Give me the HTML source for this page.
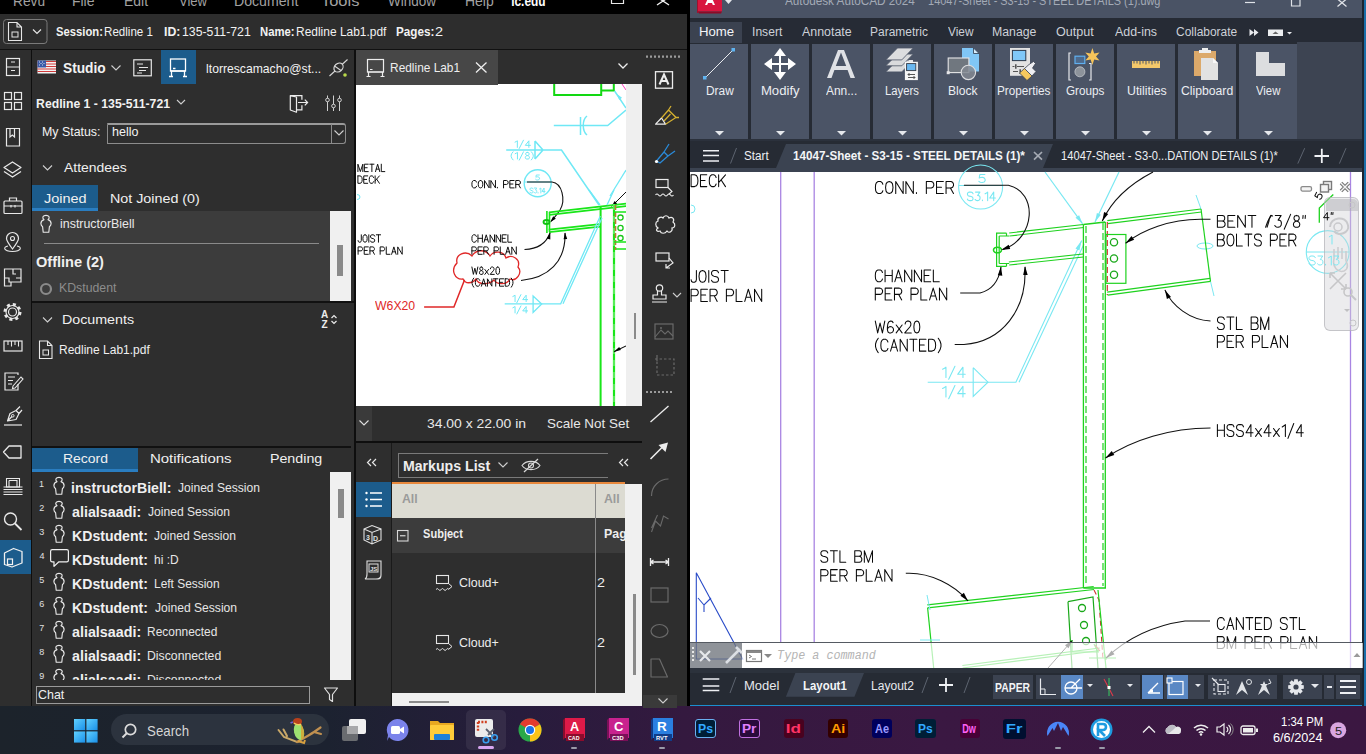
<!DOCTYPE html>
<html><head><meta charset="utf-8">
<style>
*{box-sizing:border-box}
body{margin:0;width:1366px;height:754px;position:relative;overflow:hidden;background:#000;font-family:"Liberation Sans",sans-serif;}
.a{position:absolute}
.t{position:absolute;white-space:nowrap;line-height:1}
svg{position:absolute;overflow:visible}
</style></head><body>
<!-- base -->
<div class="a" style="left:0px;top:0px;width:687px;height:14px;background:#000;"></div>
<div class="a" style="left:0px;top:14px;width:687px;height:35px;background:#2d2d2d;"></div>
<div class="a" style="left:0px;top:49px;width:687px;height:1px;background:#111;"></div>
<div class="a" style="left:0px;top:50px;width:31px;height:656px;background:#2e2e2e;"></div>
<div class="a" style="left:31px;top:50px;width:1px;height:656px;background:#0e0e0e;"></div>
<div class="a" style="left:32px;top:50px;width:322px;height:656px;background:#2e2e2e;"></div>
<div class="a" style="left:354px;top:50px;width:2px;height:656px;background:#0e0e0e;"></div>
<div class="a" style="left:356px;top:50px;width:331px;height:34px;background:#2e2e2e;"></div>
<div class="a" style="left:356px;top:84px;width:270px;height:322px;background:#fff;"></div>
<div class="a" style="left:626px;top:84px;width:16px;height:322px;background:#efefef;"></div>
<div class="a" style="left:642px;top:50px;width:45px;height:656px;background:#2e2e2e;"></div>
<div class="a" style="left:356px;top:406px;width:286px;height:35px;background:#2e2e2e;"></div>
<div class="a" style="left:356px;top:441px;width:286px;height:2px;background:#0e0e0e;"></div>
<div class="a" style="left:356px;top:443px;width:286px;height:263px;background:#2e2e2e;"></div>
<div class="a" style="left:687px;top:0px;width:3px;height:706px;background:#000;"></div>
<div class="a" style="left:690px;top:0px;width:676px;height:18px;background:#4a5365;"></div>
<div class="a" style="left:690px;top:18px;width:676px;height:25px;background:#262b35;"></div>
<div class="a" style="left:690px;top:42px;width:676px;height:97px;background:#262b34;"></div>
<div class="a" style="left:690px;top:139px;width:676px;height:2px;background:#2b313c;"></div>
<div class="a" style="left:690px;top:141px;width:676px;height:31px;background:#262b34;"></div>
<div class="a" style="left:690px;top:172px;width:676px;height:470px;background:#fff;"></div>
<div class="a" style="left:690px;top:642px;width:676px;height:27px;background:#ffffff;"></div>
<div class="a" style="left:690px;top:669px;width:676px;height:36px;background:#262b34;"></div>
<div class="a" style="left:690px;top:705px;width:676px;height:1px;background:#1b8fd0;"></div>
<div class="a" style="left:0px;top:706px;width:1366px;height:48px;background:linear-gradient(90deg,#1c232b 0%,#1c2230 24%,#271c3c 38%,#34193f 50%,#3a1842 68%,#3b1741 100%);"></div>
<!-- acad_top -->
<div class="a" style="left:1362px;top:0px;width:2px;height:706px;background:#1d2430;"></div>
<div class="a" style="left:1364px;top:0px;width:2px;height:706px;background:#1a6ea8;"></div>
<svg style="left:696px;top:0px;" width="40" height="14" viewBox="0 0 40 14">
     <path d="M1,0 H3 V11 L2,13 H1 Z" fill="#a0102e"/>
     <rect x="2" y="0" width="24" height="11.5" fill="#d8163f"/>
     <path d="M2,11.5 H26 L25,13.5 H3 Z" fill="#8e0a26"/>
     <path d="M9,5 L12.5,-3 H15.5 L19,5 H16.8 L16,3 H12 L11.2,5 Z" fill="#fff"/>
     <path d="M29,0 H36 L32.5,4 Z" fill="#e6e8ec"/>
    </svg>
<div class="t" style="left:785.25px;top:-4.56px;font-size:12px;color:#a3aab6;font-family:'Liberation Sans',sans-serif;transform:scaleX(0.9785);transform-origin:0.05px 0;">Autodesk AutoCAD 2024</div>
<div class="t" style="left:927.80px;top:-4.56px;font-size:12px;color:#a3aab6;font-family:'Liberation Sans',sans-serif;transform:scaleX(0.9096);transform-origin:0.90px 0;">14047-Sheet - S3-15 - STEEL DETAILS (1).dwg</div>
<svg style="left:1240px;top:0px;" width="126" height="14" viewBox="0 0 126 14">
     <path d="M5,2.5 H15" stroke="#e0e3e8" stroke-width="1.2"/>
     <path d="M51.5,-2 V6 H60 V-2" stroke="#e0e3e8" fill="none" stroke-width="1.2"/>
     <path d="M97.5,-1 L106.5,6.5 M106.5,-1 L97.5,6.5" stroke="#e0e3e8" stroke-width="1.3"/>
    </svg>
<div class="a" style="left:690px;top:22px;width:52px;height:21px;background:#3b4250;"></div>
<div class="t" style="left:699.00px;top:26.02px;font-size:12.5px;color:#f2f4f7;font-family:'Liberation Sans',sans-serif;transform:scaleX(1.0551);transform-origin:1.00px 0;">Home</div>
<div class="t" style="left:751.85px;top:26.02px;font-size:12.5px;color:#cdd1d8;font-family:'Liberation Sans',sans-serif;transform:scaleX(0.9667);transform-origin:1.15px 0;">Insert</div>
<div class="t" style="left:801.95px;top:26.02px;font-size:12.5px;color:#cdd1d8;font-family:'Liberation Sans',sans-serif;transform:scaleX(0.9919);transform-origin:0.05px 0;">Annotate</div>
<div class="t" style="left:870.20px;top:26.02px;font-size:12.5px;color:#cdd1d8;font-family:'Liberation Sans',sans-serif;transform:scaleX(0.9568);transform-origin:1.00px 0;">Parametric</div>
<div class="t" style="left:947.55px;top:26.02px;font-size:12.5px;color:#cdd1d8;font-family:'Liberation Sans',sans-serif;transform:scaleX(0.9478);transform-origin:0.05px 0;">View</div>
<div class="t" style="left:992.30px;top:26.02px;font-size:12.5px;color:#cdd1d8;font-family:'Liberation Sans',sans-serif;transform:scaleX(0.9828);transform-origin:1.00px 0;">Manage</div>
<div class="t" style="left:1055.90px;top:26.02px;font-size:12.5px;color:#cdd1d8;font-family:'Liberation Sans',sans-serif;transform:scaleX(1.0054);transform-origin:0.60px 0;">Output</div>
<div class="t" style="left:1114.55px;top:26.02px;font-size:12.5px;color:#cdd1d8;font-family:'Liberation Sans',sans-serif;transform:scaleX(0.9916);transform-origin:0.05px 0;">Add-ins</div>
<div class="t" style="left:1175.95px;top:26.02px;font-size:12.5px;color:#cdd1d8;font-family:'Liberation Sans',sans-serif;transform:scaleX(0.9569);transform-origin:0.65px 0;">Collaborate</div>
<svg style="left:1249px;top:29px;" width="50" height="8" viewBox="0 0 50 8">
     <path d="M0.5,0 L5,3.5 L0.5,7 Z M5,0 L9.5,3.5 L5,7 Z" fill="#e8eaee"/>
     <rect x="19" y="0.5" width="15" height="6.5" fill="#eceef0"/>
     <path d="M23.5,5 L26.5,2.5 L29.5,5 Z" fill="#666"/>
     <path d="M38,3 H43 L40.5,5.5 Z" fill="#e8eaee"/>
    </svg>
<div class="a" style="left:690px;top:44px;width:58px;height:95px;background:#4b5466;"></div>
<div class="t" style="left:705.50px;top:85.44px;font-size:12px;color:#eceef2;font-family:'Liberation Sans',sans-serif;transform:scaleX(0.9889);transform-origin:1.00px 0;">Draw</div>
<svg style="left:715px;top:131px;" width="9" height="5" viewBox="0 0 9 5"><path d="M0,0 H9 L4.5,4.5 Z" fill="#e6e8ec"/></svg>
<div class="a" style="left:751px;top:44px;width:58px;height:95px;background:#4b5466;"></div>
<div class="t" style="left:760.50px;top:85.44px;font-size:12px;color:#eceef2;font-family:'Liberation Sans',sans-serif;transform:scaleX(1.0949);transform-origin:1.00px 0;">Modify</div>
<svg style="left:776px;top:131px;" width="9" height="5" viewBox="0 0 9 5"><path d="M0,0 H9 L4.5,4.5 Z" fill="#e6e8ec"/></svg>
<div class="a" style="left:812px;top:44px;width:58px;height:95px;background:#4b5466;"></div>
<div class="t" style="left:826.35px;top:85.44px;font-size:12px;color:#eceef2;font-family:'Liberation Sans',sans-serif;transform:scaleX(0.9950);transform-origin:0.05px 0;">Ann...</div>
<svg style="left:837px;top:131px;" width="9" height="5" viewBox="0 0 9 5"><path d="M0,0 H9 L4.5,4.5 Z" fill="#e6e8ec"/></svg>
<div class="a" style="left:873px;top:44px;width:58px;height:95px;background:#4b5466;"></div>
<div class="t" style="left:884.60px;top:85.44px;font-size:12px;color:#eceef2;font-family:'Liberation Sans',sans-serif;transform:scaleX(0.9391);transform-origin:1.00px 0;">Layers</div>
<svg style="left:898px;top:131px;" width="9" height="5" viewBox="0 0 9 5"><path d="M0,0 H9 L4.5,4.5 Z" fill="#e6e8ec"/></svg>
<div class="a" style="left:934px;top:44px;width:58px;height:95px;background:#4b5466;"></div>
<div class="t" style="left:947.60px;top:85.44px;font-size:12px;color:#eceef2;font-family:'Liberation Sans',sans-serif;transform:scaleX(1.0071);transform-origin:1.00px 0;">Block</div>
<svg style="left:959px;top:131px;" width="9" height="5" viewBox="0 0 9 5"><path d="M0,0 H9 L4.5,4.5 Z" fill="#e6e8ec"/></svg>
<div class="a" style="left:995px;top:44px;width:58px;height:95px;background:#4b5466;"></div>
<div class="t" style="left:996.70px;top:85.44px;font-size:12px;color:#eceef2;font-family:'Liberation Sans',sans-serif;transform:scaleX(0.9774);transform-origin:1.00px 0;">Properties</div>
<svg style="left:1020px;top:131px;" width="9" height="5" viewBox="0 0 9 5"><path d="M0,0 H9 L4.5,4.5 Z" fill="#e6e8ec"/></svg>
<div class="a" style="left:1056px;top:44px;width:58px;height:95px;background:#4b5466;"></div>
<div class="t" style="left:1066.10px;top:85.44px;font-size:12px;color:#eceef2;font-family:'Liberation Sans',sans-serif;transform:scaleX(0.9752);transform-origin:0.60px 0;">Groups</div>
<svg style="left:1081px;top:131px;" width="9" height="5" viewBox="0 0 9 5"><path d="M0,0 H9 L4.5,4.5 Z" fill="#e6e8ec"/></svg>
<div class="a" style="left:1117px;top:44px;width:58px;height:95px;background:#4b5466;"></div>
<div class="t" style="left:1126.60px;top:85.44px;font-size:12px;color:#eceef2;font-family:'Liberation Sans',sans-serif;transform:scaleX(1.0295);transform-origin:0.90px 0;">Utilities</div>
<svg style="left:1142px;top:131px;" width="9" height="5" viewBox="0 0 9 5"><path d="M0,0 H9 L4.5,4.5 Z" fill="#e6e8ec"/></svg>
<div class="a" style="left:1178px;top:44px;width:58px;height:95px;background:#4b5466;"></div>
<div class="t" style="left:1180.80px;top:85.44px;font-size:12px;color:#eceef2;font-family:'Liberation Sans',sans-serif;transform:scaleX(1.0170);transform-origin:0.60px 0;">Clipboard</div>
<svg style="left:1203px;top:131px;" width="9" height="5" viewBox="0 0 9 5"><path d="M0,0 H9 L4.5,4.5 Z" fill="#e6e8ec"/></svg>
<div class="a" style="left:1239px;top:44px;width:58px;height:95px;background:#4b5466;"></div>
<div class="t" style="left:1255.55px;top:85.44px;font-size:12px;color:#eceef2;font-family:'Liberation Sans',sans-serif;transform:scaleX(0.9437);transform-origin:0.05px 0;">View</div>
<svg style="left:1264px;top:131px;" width="9" height="5" viewBox="0 0 9 5"><path d="M0,0 H9 L4.5,4.5 Z" fill="#e6e8ec"/></svg>
<div class="a" style="left:1297px;top:42px;width:65px;height:97px;background:#3d4452;"></div>
<svg style="left:690px;top:44px;" width="58" height="40" viewBox="0 0 58 40">
     <line x1="15" y1="34" x2="43" y2="6" stroke="#e8eaee" stroke-width="1"/>
     <rect x="13" y="32" width="3.5" height="3.5" fill="#5fb3f0"/>
     <rect x="41.5" y="4" width="3.5" height="3.5" fill="#5fb3f0"/></svg>
<svg style="left:751px;top:44px;" width="58" height="40" viewBox="0 0 58 40">
     <g fill="#fff"><path d="M29,4 L35,12 H23 Z M29,36 L35,28 H23 Z M13,20 L21,14 V26 Z M45,20 L37,14 V26 Z"/>
     <rect x="28" y="10" width="2" height="20"/><rect x="19" y="19" width="20" height="2"/></g></svg>
<svg style="left:812px;top:44px;" width="58" height="40" viewBox="0 0 58 40">
     <path d="M15,34 L26,6 H32 L43,34 H38.5 L35.6,26 H22.4 L19.5,34 Z M23.8,22 H34.2 L29,8.5 Z" fill="#dfe1e5" fill-rule="evenodd"/></svg>
<svg style="left:873px;top:44px;" width="58" height="40" viewBox="0 0 58 40">
     <path d="M12.8,27.9 L24.5,16 H40.2 L28.8,27.9 Z" fill="#d9dadc" stroke="#4b5466" stroke-width="0.8"/>
     <path d="M12.8,21.8 L24.5,10.1 H40.2 L28.8,21.8 Z" fill="#d9dadc" stroke="#4b5466" stroke-width="0.8"/>
     <path d="M12.8,15.9 L24.5,4 H40.2 L28.8,15.9 Z" fill="#dcdddf" stroke="#4b5466" stroke-width="0.8"/>
     <rect x="31.9" y="17.8" width="13" height="18.3" fill="#f6f6f6"/>
     <rect x="36" y="16" width="4" height="2" fill="#e6e6e6"/>
     <rect x="33.6" y="19.6" width="9.2" height="7" fill="#6ab8f0" stroke="#333a44" stroke-width="0.9"/>
     <path d="M35,30.5 H42 M35,33.5 H42 M36.5,29 L35,30.5 L36.5,32 M40.5,32 L42,33.5 L40.5,35" stroke="#444" stroke-width="0.9" fill="none"/></svg>
<svg style="left:934px;top:44px;" width="58" height="40" viewBox="0 0 58 40">
     <path d="M28,4 H39.5 L45,9.5 V27.6 H28 Z" fill="#80c6f6"/>
     <path d="M39.5,4 V9.5 H45 Z" fill="#d8ecfa" stroke="#2d3a4c" stroke-width="0.8"/>
     <rect x="14.2" y="14" width="20.7" height="14.6" fill="#70777f" stroke="#e6e6e8" stroke-width="1.1"/>
     <circle cx="34.4" cy="28.4" r="7.2" fill="rgba(130,136,146,0.85)" stroke="#dcdde0" stroke-width="1.1"/>
     <rect x="12.7" y="27.2" width="3" height="3" fill="#e6e6e8"/></svg>
<svg style="left:995px;top:44px;" width="58" height="40" viewBox="0 0 58 40">
     <rect x="15" y="4" width="20" height="27.8" fill="#e2e2e2"/>
     <rect x="17.4" y="6.4" width="13.4" height="10.2" fill="#80c8f8" stroke="#2d3a4c" stroke-width="1"/>
     <path d="M17.5,22.5 H19.5 M22,22.5 H29 M18,27.5 H23" stroke="#555" stroke-width="1"/>
     <path d="M20.8,20.2 V24.8 M25.2,25.2 V29.8" stroke="#555" stroke-width="1.6"/>
     <path d="M24.5,29 L29.5,24.5 L37,32 L32,36.5 Z" fill="#f7c95e" stroke="#3b4250" stroke-width="0.8"/>
     <path d="M29.5,24.5 L34,20.5 L38.5,17.5 L40.5,19.5 L37.5,24 L41,27.5 L37,32 Z" fill="#eeeef2" stroke="#3b4250" stroke-width="0.8"/></svg>
<svg style="left:1056px;top:44px;" width="58" height="40" viewBox="0 0 58 40">
     <path d="M15,9 H13 V36 H15 M33,19.5 H35 V36 H33" stroke="#e6e8ec" fill="none" stroke-width="1.2"/>
     <rect x="19" y="12.2" width="9.8" height="7.3" fill="#4e6a8c" stroke="#60b0f0" stroke-width="1.2"/>
     <circle cx="23.9" cy="27.8" r="5" fill="#8d939b" stroke="#c3c7cc" stroke-width="0.8"/>
     <path d="M36.4,4 L38.2,9.5 L43.5,8.5 L40,12.5 L43.5,16.5 L38.2,15.5 L36.4,21 L34.6,15.5 L29.3,16.5 L32.8,12.5 L29.3,8.5 L34.6,9.5 Z" fill="#f6c45a"/></svg>
<svg style="left:1117px;top:44px;" width="58" height="40" viewBox="0 0 58 40">
     <rect x="15" y="17" width="28" height="7" fill="#f4c86a"/>
     <path d="M17,17 V19.5 M20,17 V19.5 M23,17 V20.5 M26,17 V19.5 M29,17 V20.5 M32,17 V19.5 M35,17 V20.5 M38,17 V19.5 M41,17 V19.5" stroke="#4b5466" stroke-width="1"/></svg>
<svg style="left:1178px;top:44px;" width="58" height="40" viewBox="0 0 58 40">
     <rect x="16" y="7" width="22" height="25" fill="#dca96a"/>
     <rect x="24" y="4" width="6" height="3" fill="#eeeeee"/>
     <rect x="21" y="6" width="12" height="3" fill="#eeeeee"/>
     <path d="M23,14 H35 L40,19 V36 H23 Z" fill="#e2e2e2"/>
     <path d="M35,14 L40,19 H35 Z" fill="#f8f8f8"/></svg>
<svg style="left:1239px;top:44px;" width="58" height="40" viewBox="0 0 58 40">
     <path d="M17,8 H30 V19 H46 V32 H17 Z" fill="#dcdddf"/></svg>
<div class="a" style="left:690px;top:168px;width:672px;height:4px;background:#3b4351;"></div>
<svg style="left:690px;top:141px;" width="672" height="31" viewBox="0 0 672 31">
     <path d="M86,27 L96,3 H363 L353,27 Z" fill="#3b4351"/>
     <path d="M13,9.7 H29 M13,14.6 H29 M13,19.9 H29" stroke="#eef0f3" stroke-width="1.5"/>
     <path d="M40.5,22.5 L46.5,7" stroke="#5d6470" stroke-width="1"/>
     <path d="M607.8,22.6 L614.7,7.2 M649.4,22.6 L656,7.2" stroke="#5d6470" stroke-width="1"/>
     <path d="M624.5,15 H639 M631.8,7.8 V22" stroke="#f0f2f5" stroke-width="1.8"/>
     <path d="M344,11 L352,18.6 M352,11 L344,18.6" stroke="#a6abb4" stroke-width="1.7"/>
    </svg>
<div class="t" style="left:744.45px;top:150.02px;font-size:12.5px;color:#eef0f3;font-family:'Liberation Sans',sans-serif;transform:scaleX(0.9339);transform-origin:0.55px 0;">Start</div>
<div class="t" style="left:792.80px;top:150.02px;font-size:12.5px;color:#f4f6f8;font-family:'Liberation Sans',sans-serif;font-weight:bold;transform:scaleX(0.9339);transform-origin:0.80px 0;">14047-Sheet - S3-15 - STEEL DETAILS (1)*</div>
<div class="t" style="left:1060.65px;top:150.02px;font-size:12.5px;color:#eef0f3;font-family:'Liberation Sans',sans-serif;transform:scaleX(0.8882);transform-origin:0.95px 0;">14047-Sheet - S3-0...DATION DETAILS (1)*</div>
<!-- acad_draw -->
<svg style="left:690px;top:172px" width="672" height="496" viewBox="690 172 672 496"><line x1="780.7" y1="172" x2="780.7" y2="643" stroke="#a985e2" stroke-width="1.3"/><line x1="814.2" y1="172" x2="814.2" y2="643" stroke="#a985e2" stroke-width="1.3"/><line x1="1350.5" y1="172" x2="1350.5" y2="668" stroke="#a985e2" stroke-width="1.3"/><path d="M1045,172 L1082.6,223.8 M1119,172 L1095,222" stroke="#7ae8f2" stroke-width="1.2" fill="none"/><path d="M1082.6,223.8 L1075.5,217.8 L1079.1,215.2 Z" fill="#7ae8f2"/><path d="M1095.0,222.0 L1096.9,212.9 L1100.9,214.8 Z" fill="#7ae8f2"/><path d="M927.7,382.2 H1015.9 L1081.7,240.5 M1019,382.2 L1084,244" stroke="#7ae8f2" stroke-width="1.1" fill="none"/><path d="M1081.7,240.5 L1079.4,250.5 L1075.5,248.6 Z" fill="#7ae8f2"/><path d="M973.2,367.7 V396.5 L988,382.2 L973.2,367.7" stroke="#7ae8f2" stroke-width="1.1" fill="none"/><circle cx="980.6" cy="187" r="22" stroke="#7ae8f2" stroke-width="1.1" fill="none"/><line x1="958.6" y1="185.5" x2="1002.6" y2="185.5" stroke="#7ae8f2" stroke-width="1"/><path d="M691,205 A4,4 0 0 1 691,213" stroke="#7ae8f2" stroke-width="1" fill="none"/><path d="M1196,195 L1201,209 M1210.5,281.4 L1214,296" stroke="#7ae8f2" stroke-width="1"/><ellipse cx="1205" cy="246" rx="8" ry="3" stroke="#7ae8f2" stroke-width="1" fill="none"/><line x1="1009.2" y1="233" x2="1083.4" y2="224.5" stroke="#1fd21f" stroke-width="1.2"/><line x1="1009.5" y1="236.0" x2="1083.7" y2="227.5" stroke="#1fd21f" stroke-width="1.2"/><line x1="1009.2" y1="265" x2="1083.4" y2="257" stroke="#1fd21f" stroke-width="1.2"/><line x1="1008.9" y1="262.0" x2="1083.1" y2="254.0" stroke="#1fd21f" stroke-width="1.2"/><path d="M1006.5,233.2 H996.6 V266.3 H1006.5 M999.2,236 V263.5 M1006.5,233.2 V236 H999.2 M1006.5,266.3 V263.5 H999.2 M1006.5,236 L1009.2,236 M1006.5,263.5 L1009.2,263.5" stroke="#1fd21f" stroke-width="1.2" fill="none"/><ellipse cx="997.5" cy="250" rx="4" ry="2.8" stroke="#1fd21f" stroke-width="1.6" fill="none"/><path d="M1083.4,224.5 V588 M1105.3,222 V588 M1083.4,224.5 L1105.3,222 M1083.4,588 H1106" stroke="#1fd21f" stroke-width="1.3" fill="none"/><path d="M1086,226 V586 M1103,223 V586" stroke="#1fd21f" stroke-width="1.2" stroke-dasharray="7,3" fill="none"/><line x1="1107.3" y1="220.6" x2="1201" y2="209" stroke="#1fd21f" stroke-width="1.2"/><line x1="1107.7" y1="223.6" x2="1201.4" y2="212.0" stroke="#1fd21f" stroke-width="1.2"/><line x1="1107.6" y1="295.2" x2="1210.5" y2="281.4" stroke="#1fd21f" stroke-width="1.2"/><line x1="1107.2" y1="292.2" x2="1210.1" y2="278.4" stroke="#1fd21f" stroke-width="1.2"/><line x1="1201" y1="209" x2="1210.5" y2="281.4" stroke="#1fd21f" stroke-width="1.2"/><path d="M1107.3,222 V295" stroke="#d03030" stroke-width="1.2" stroke-dasharray="6,3"/><rect x="1106" y="234.5" width="19.9" height="48.8" stroke="#1fd21f" stroke-width="1.2" fill="none"/><circle cx="1114" cy="242.2" r="3.6" stroke="#1aa81a" stroke-width="1.3" fill="none"/><circle cx="1114" cy="258.5" r="3.6" stroke="#1aa81a" stroke-width="1.3" fill="none"/><circle cx="1114" cy="274.8" r="3.6" stroke="#1aa81a" stroke-width="1.3" fill="none"/><line x1="927.6" y1="607.8" x2="1094" y2="589.5" stroke="#1fd21f" stroke-width="1.2"/><line x1="927.3" y1="604.8" x2="1093.7" y2="586.5" stroke="#1fd21f" stroke-width="1.2"/><line x1="927.6" y1="607.8" x2="933.7" y2="668" stroke="#1fd21f" stroke-width="1.2"/><path d="M1068,601.7 L1093,597 L1098,668 M1068,601.7 L1072,668" stroke="#1aa81a" stroke-width="1.2" fill="none"/><circle cx="1082" cy="608" r="3.5" stroke="#1aa81a" stroke-width="1.3" fill="none"/><circle cx="1084" cy="625" r="3.5" stroke="#1aa81a" stroke-width="1.3" fill="none"/><circle cx="1086" cy="641" r="3.5" stroke="#1aa81a" stroke-width="1.3" fill="none"/><path d="M1094,590 L1099,600 L1103,660" stroke="#d03030" stroke-width="1.1" stroke-dasharray="5,3" fill="none"/><path d="M1098,590 L1106,668" stroke="#1fd21f" stroke-width="1.2" fill="none"/><path d="M927,595 L930,610 M920,640 H940" stroke="#7ae8f2" stroke-width="1" fill="none"/><line x1="962.7" y1="668" x2="1100" y2="650.5" stroke="#1fd21f" stroke-width="1.2"/><line x1="962.4" y1="665.5" x2="1099.7" y2="648.0" stroke="#1fd21f" stroke-width="1.2"/><path d="M1072,640 V652 H1099 M1094,644 L1098,652" stroke="#1fd21f" stroke-width="1.2" fill="none"/><path d="M1095,645 L1100,651" stroke="#d03030" stroke-width="1.1" fill="none"/><path d="M1089,658 H1116 M1104,652 L1106,660" stroke="#1fd21f" stroke-width="1.2" fill="none"/><path d="M696.3,572.7 V659 H742.7 Z" stroke="#2a4cc8" stroke-width="1.1" fill="none"/><path d="M698,598 L704,605 L711,598 M704,605 V612" stroke="#2a4cc8" stroke-width="1.1" fill="none"/><path d="M963.9,185.2 H1008.4 C1038,192 1036,238 1003,249.5" stroke="#111" stroke-width="1.1" fill="none"/><path d="M1001.0,250.0 L1008.7,244.8 L1010.2,249.1 Z" fill="#000"/><path d="M1153,172 C1130,184 1112,200 1102.3,221" stroke="#111" stroke-width="1.1" fill="none"/><path d="M1102.3,221.0 L1104.1,211.9 L1108.2,213.9 Z" fill="#000"/><path d="M960.2,293 H980 C992,290 999,280 1001,267" stroke="#111" stroke-width="1.1" fill="none"/><path d="M1001.0,266.5 L1002.3,275.7 L997.8,275.2 Z" fill="#000"/><path d="M954.7,344.5 H964 C1002,342 1027,310 1025,267" stroke="#111" stroke-width="1.1" fill="none"/><path d="M1025.0,266.0 L1027.7,274.9 L1023.2,275.1 Z" fill="#000"/><path d="M1210.5,219.2 H1201 C1170,219 1142,230 1125.6,243.2" stroke="#111" stroke-width="1.1" fill="none"/><path d="M1125.6,243.2 L1131.5,236.0 L1134.2,239.7 Z" fill="#000"/><path d="M1210.5,321 C1190,320 1172,306 1164.9,289.9" stroke="#111" stroke-width="1.1" fill="none"/><path d="M1164.9,289.9 L1171.0,296.9 L1166.9,299.0 Z" fill="#000"/><path d="M1210.5,428 C1170,428 1132,440 1105.5,458" stroke="#111" stroke-width="1.1" fill="none"/><path d="M1105.5,458.0 L1111.7,451.1 L1114.3,454.9 Z" fill="#000"/><path d="M905.8,573.3 C930,572 955,585 968,601" stroke="#111" stroke-width="1.1" fill="none"/><path d="M968.0,601.0 L960.4,595.7 L963.9,592.7 Z" fill="#000"/><path d="M1210,621 H1185 C1150,626 1125,640 1106,658" stroke="#111" stroke-width="1.1" fill="none"/><path d="M1048,668 L1070,643" stroke="#111" stroke-width="1" fill="none"/><path d="M1072.6,640.0 L1068.5,648.3 L1065.0,645.3 Z" fill="#000"/><path d="M1106.0,658.0 L1111.6,650.6 L1114.5,654.2 Z" fill="#000"/><circle cx="1327.7" cy="252" r="21.4" stroke="#7ae8f2" stroke-width="1.1" fill="none"/><line x1="1306" y1="252" x2="1349" y2="252" stroke="#7ae8f2" stroke-width="1"/><path d="M1333.3,194.5 L1319.3,208 V222.7" stroke="#1fd21f" stroke-width="1.3" fill="none"/></svg>
<svg style="left:0;top:0" width="1366" height="754" viewBox="0 0 1366 754"><defs><clipPath id="cadclip"><rect x="690" y="172" width="672" height="496"/></clipPath></defs><g clip-path="url(#cadclip)"><path d="M691.10,174.80 L691.10,186.60 L694.53,186.60 L696.47,185.81 L697.61,183.72 L697.96,180.70 L697.61,177.68 L696.47,175.59 L694.53,174.80 L691.10,174.80 M706.76,174.80 L700.47,174.80 L700.47,186.60 L706.76,186.60 M700.47,180.44 L705.04,180.44 M716.13,177.42 L715.44,175.85 L714.07,174.80 L711.79,174.80 L710.30,175.85 L709.50,177.68 L709.27,180.70 L709.50,183.72 L710.30,185.55 L711.79,186.60 L714.07,186.60 L715.44,185.55 L716.13,183.98 M718.64,174.80 L718.64,186.60 M725.50,174.80 L718.64,182.67 M721.16,180.04 L725.50,186.60" stroke="#0a0a0a" stroke-width="1.05" fill="none" stroke-linecap="round" stroke-linejoin="round"/><path d="M696.40,270.50 L696.40,279.68 L695.81,281.51 L694.40,282.30 L692.87,282.30 L691.57,281.51 L691.10,279.68 M702.52,270.50 L700.64,271.16 L699.46,272.86 L698.99,276.40 L699.46,279.94 L700.64,281.64 L702.52,282.30 L704.41,281.64 L705.59,279.94 L706.06,276.40 L705.59,272.86 L704.41,271.16 L702.52,270.50 M708.77,270.50 L708.77,282.30 M718.54,272.73 L717.60,271.02 L715.95,270.50 L713.83,270.50 L712.42,271.02 L711.59,272.34 L711.59,274.17 L712.42,275.48 L713.83,276.14 L716.19,276.66 L717.60,277.32 L718.42,278.63 L718.42,280.46 L717.60,281.78 L715.95,282.30 L713.83,282.30 L712.42,281.78 L711.48,280.20 M721.13,270.50 L728.20,270.50 M724.67,270.50 L724.67,282.30" stroke="#0a0a0a" stroke-width="1.05" fill="none" stroke-linecap="round" stroke-linejoin="round"/><path d="M691.10,301.40 L691.10,289.20 L695.87,289.20 L697.42,290.01 L698.26,291.78 L698.26,293.27 L697.42,295.03 L695.87,295.71 L691.10,295.71 M707.44,289.20 L700.88,289.20 L700.88,301.40 L707.44,301.40 M700.88,295.03 L705.65,295.03 M710.06,301.40 L710.06,289.20 L714.83,289.20 L716.38,290.01 L717.22,291.78 L717.22,293.27 L716.38,295.03 L714.83,295.71 L710.06,295.71 M714.24,295.71 L717.22,301.40 M726.40,301.40 L726.40,289.20 L731.17,289.20 L732.72,290.01 L733.56,291.78 L733.56,293.27 L732.72,295.03 L731.17,295.71 L726.40,295.71 M736.18,289.20 L736.18,301.40 L742.14,301.40 M744.77,301.40 L748.34,289.20 L751.92,301.40 M745.96,297.33 L750.73,297.33 M754.54,301.40 L754.54,289.20 L761.70,301.40 L761.70,289.20" stroke="#0a0a0a" stroke-width="1.05" fill="none" stroke-linecap="round" stroke-linejoin="round"/><path d="M882.84,184.17 L882.09,182.57 L880.61,181.50 L878.13,181.50 L876.52,182.57 L875.65,184.43 L875.40,187.50 L875.65,190.57 L876.52,192.43 L878.13,193.50 L880.61,193.50 L882.09,192.43 L882.84,190.83 M889.28,181.50 L887.30,182.17 L886.06,183.90 L885.57,187.50 L886.06,191.10 L887.30,192.83 L889.28,193.50 L891.27,192.83 L892.51,191.10 L893.00,187.50 L892.51,183.90 L891.27,182.17 L889.28,181.50 M895.73,193.50 L895.73,181.50 L903.17,193.50 L903.17,181.50 M905.90,193.50 L905.90,181.50 L913.33,193.50 L913.33,181.50 M916.43,192.57 L916.43,193.50 M926.35,193.50 L926.35,181.50 L931.31,181.50 L932.92,182.30 L933.79,184.03 L933.79,185.50 L932.92,187.23 L931.31,187.90 L926.35,187.90 M943.33,181.50 L936.52,181.50 L936.52,193.50 L943.33,193.50 M936.52,187.23 L941.48,187.23 M946.06,193.50 L946.06,181.50 L951.02,181.50 L952.63,182.30 L953.50,184.03 L953.50,185.50 L952.63,187.23 L951.02,187.90 L946.06,187.90 M950.40,187.90 L953.50,193.50" stroke="#0a0a0a" stroke-width="1.05" fill="none" stroke-linecap="round" stroke-linejoin="round"/><path d="M882.45,272.52 L881.74,270.95 L880.31,269.90 L877.92,269.90 L876.37,270.95 L875.54,272.78 L875.30,275.80 L875.54,278.82 L876.37,280.65 L877.92,281.70 L880.31,281.70 L881.74,280.65 L882.45,279.08 M885.07,269.90 L885.07,281.70 M892.22,269.90 L892.22,281.70 M885.07,275.54 L892.22,275.54 M894.85,281.70 L898.42,269.90 L902.00,281.70 M896.04,277.77 L900.80,277.77 M904.62,281.70 L904.62,269.90 L911.77,281.70 L911.77,269.90 M914.39,281.70 L914.39,269.90 L921.54,281.70 L921.54,269.90 M930.72,269.90 L924.16,269.90 L924.16,281.70 L930.72,281.70 M924.16,275.54 L928.93,275.54 M933.34,269.90 L933.34,281.70 L939.30,281.70" stroke="#0a0a0a" stroke-width="1.05" fill="none" stroke-linecap="round" stroke-linejoin="round"/><path d="M875.30,299.90 L875.30,288.10 L880.12,288.10 L881.69,288.89 L882.54,290.59 L882.54,292.03 L881.69,293.74 L880.12,294.39 L875.30,294.39 M891.82,288.10 L885.19,288.10 L885.19,299.90 L891.82,299.90 M885.19,293.74 L890.01,293.74 M894.48,299.90 L894.48,288.10 L899.30,288.10 L900.87,288.89 L901.71,290.59 L901.71,292.03 L900.87,293.74 L899.30,294.39 L894.48,294.39 M898.70,294.39 L901.71,299.90 M911.00,299.90 L911.00,288.10 L915.82,288.10 L917.39,288.89 L918.24,290.59 L918.24,292.03 L917.39,293.74 L915.82,294.39 L911.00,294.39 M920.89,288.10 L920.89,299.90 L926.92,299.90 M929.57,299.90 L933.19,288.10 L936.81,299.90 M930.78,295.97 L935.60,295.97 M939.46,299.90 L939.46,288.10 L946.70,299.90 L946.70,288.10" stroke="#0a0a0a" stroke-width="1.05" fill="none" stroke-linecap="round" stroke-linejoin="round"/><path d="M875.30,321.10 L877.67,332.90 L880.05,323.07 L882.42,332.90 L884.79,321.10 M893.10,322.67 L892.15,321.36 L890.61,321.10 L888.95,321.76 L887.88,323.72 L887.40,327.00 L887.40,329.88 L888.00,331.98 L889.30,332.90 L891.08,332.90 L892.63,332.11 L893.46,330.41 L893.46,329.10 L892.63,327.39 L891.08,326.61 L889.54,326.74 L888.12,327.66 L887.40,329.62 M896.19,325.03 L902.12,332.90 M902.12,325.03 L896.19,332.90 M905.09,323.98 L905.68,322.15 L907.10,321.10 L909.00,321.10 L910.31,322.02 L910.90,323.59 L910.78,325.30 L909.83,327.00 L904.73,332.90 L911.26,332.90 M916.83,321.10 L915.17,321.76 L914.22,323.72 L913.87,327.00 L914.22,330.28 L915.17,332.24 L916.83,332.90 L918.49,332.24 L919.44,330.28 L919.80,327.00 L919.44,323.72 L918.49,321.76 L916.83,321.10" stroke="#0a0a0a" stroke-width="1.05" fill="none" stroke-linecap="round" stroke-linejoin="round"/><path d="M878.25,338.25 L876.48,341.00 L875.54,344.02 L875.54,346.64 L876.48,349.79 L878.25,352.67 M887.91,341.92 L887.21,340.35 L885.79,339.30 L883.43,339.30 L881.90,340.35 L881.08,342.18 L880.84,345.20 L881.08,348.22 L881.90,350.05 L883.43,351.10 L885.79,351.10 L887.21,350.05 L887.91,348.48 M890.51,351.10 L894.04,339.30 L897.58,351.10 M891.69,347.17 L896.40,347.17 M900.17,351.10 L900.17,339.30 L907.25,351.10 L907.25,339.30 M909.84,339.30 L916.91,339.30 M913.38,339.30 L913.38,351.10 M925.99,339.30 L919.51,339.30 L919.51,351.10 L925.99,351.10 M919.51,344.94 L924.22,344.94 M928.59,339.30 L928.59,351.10 L932.12,351.10 L934.13,350.31 L935.31,348.22 L935.66,345.20 L935.31,342.18 L934.13,340.09 L932.12,339.30 L928.59,339.30 M938.25,338.25 L940.02,341.00 L940.96,344.02 L940.96,346.64 L940.02,349.79 L938.25,352.67" stroke="#0a0a0a" stroke-width="1.05" fill="none" stroke-linecap="round" stroke-linejoin="round"/><path d="M1217.40,215.40 L1222.50,215.40 L1224.03,216.06 L1224.67,217.37 L1224.67,219.07 L1224.03,220.38 L1222.50,221.04 L1217.40,221.04 M1222.50,221.04 L1224.16,221.82 L1225.05,223.27 L1225.05,225.10 L1224.16,226.54 L1222.50,227.20 L1217.40,227.20 L1217.40,215.40 M1234.87,215.40 L1227.86,215.40 L1227.86,227.20 L1234.87,227.20 M1227.86,221.04 L1232.96,221.04 M1237.68,227.20 L1237.68,215.40 L1245.33,227.20 L1245.33,215.40 M1248.14,215.40 L1255.79,215.40 M1251.96,215.40 L1251.96,227.20 M1265.61,227.20 L1267.52,221.96 L1268.80,219.33 L1270.71,215.40 M1267.14,227.20 L1268.80,221.96 L1269.43,218.68 L1271.35,215.40 L1272.62,216.06 M1275.30,215.40 L1281.17,215.40 L1278.11,220.12 L1279.64,220.25 L1280.91,221.17 L1281.42,223.00 L1281.17,225.23 L1280.02,226.68 L1278.11,227.20 L1276.19,226.94 L1274.79,225.63 M1290.61,214.35 L1284.23,229.17 M1296.60,215.40 L1294.69,215.92 L1294.05,217.37 L1294.05,218.94 L1294.94,220.38 L1296.60,221.04 L1298.26,221.69 L1299.53,223.00 L1299.79,224.58 L1299.28,226.41 L1297.88,227.20 L1295.32,227.20 L1293.92,226.41 L1293.41,224.58 L1293.67,223.00 L1294.94,221.69 L1296.60,221.04 L1298.26,220.38 L1299.15,218.94 L1299.15,217.37 L1298.51,215.92 L1296.60,215.40 M1303.10,215.40 L1302.85,218.55 M1305.40,215.40 L1305.14,218.55" stroke="#0a0a0a" stroke-width="1.05" fill="none" stroke-linecap="round" stroke-linejoin="round"/><path d="M1217.40,234.10 L1222.06,234.10 L1223.46,234.76 L1224.04,236.07 L1224.04,237.77 L1223.46,239.08 L1222.06,239.74 L1217.40,239.74 M1222.06,239.74 L1223.57,240.52 L1224.39,241.97 L1224.39,243.80 L1223.57,245.24 L1222.06,245.90 L1217.40,245.90 L1217.40,234.10 M1230.44,234.10 L1228.58,234.76 L1227.42,236.46 L1226.95,240.00 L1227.42,243.54 L1228.58,245.24 L1230.44,245.90 L1232.31,245.24 L1233.47,243.54 L1233.94,240.00 L1233.47,236.46 L1232.31,234.76 L1230.44,234.10 M1236.50,234.10 L1236.50,245.90 L1242.32,245.90 M1244.89,234.10 L1251.87,234.10 M1248.38,234.10 L1248.38,245.90 M1261.43,236.33 L1260.49,234.62 L1258.86,234.10 L1256.77,234.10 L1255.37,234.62 L1254.55,235.94 L1254.55,237.77 L1255.37,239.08 L1256.77,239.74 L1259.10,240.26 L1260.49,240.92 L1261.31,242.23 L1261.31,244.06 L1260.49,245.38 L1258.86,245.90 L1256.77,245.90 L1255.37,245.38 L1254.44,243.80 M1270.39,245.90 L1270.39,234.10 L1275.05,234.10 L1276.57,234.89 L1277.38,236.59 L1277.38,238.03 L1276.57,239.74 L1275.05,240.39 L1270.39,240.39 M1286.35,234.10 L1279.94,234.10 L1279.94,245.90 L1286.35,245.90 M1279.94,239.74 L1284.60,239.74 M1288.91,245.90 L1288.91,234.10 L1293.57,234.10 L1295.08,234.89 L1295.90,236.59 L1295.90,238.03 L1295.08,239.74 L1293.57,240.39 L1288.91,240.39 M1292.99,240.39 L1295.90,245.90" stroke="#0a0a0a" stroke-width="1.05" fill="none" stroke-linecap="round" stroke-linejoin="round"/><path d="M1224.36,319.36 L1223.43,317.56 L1221.81,317.00 L1219.72,317.00 L1218.33,317.56 L1217.52,318.94 L1217.52,320.89 L1218.33,322.28 L1219.72,322.97 L1222.04,323.53 L1223.43,324.22 L1224.25,325.61 L1224.25,327.56 L1223.43,328.94 L1221.81,329.50 L1219.72,329.50 L1218.33,328.94 L1217.40,327.28 M1226.91,317.00 L1233.88,317.00 M1230.40,317.00 L1230.40,329.50 M1236.43,317.00 L1236.43,329.50 L1242.23,329.50 M1251.16,317.00 L1255.80,317.00 L1257.20,317.69 L1257.78,319.08 L1257.78,320.89 L1257.20,322.28 L1255.80,322.97 L1251.16,322.97 M1255.80,322.97 L1257.31,323.81 L1258.13,325.33 L1258.13,327.28 L1257.31,328.81 L1255.80,329.50 L1251.16,329.50 L1251.16,317.00 M1260.68,329.50 L1260.68,317.00 L1264.74,329.50 L1268.80,317.00 L1268.80,329.50" stroke="#0a0a0a" stroke-width="1.05" fill="none" stroke-linecap="round" stroke-linejoin="round"/><path d="M1217.40,347.50 L1217.40,335.50 L1222.14,335.50 L1223.68,336.30 L1224.50,338.03 L1224.50,339.50 L1223.68,341.23 L1222.14,341.90 L1217.40,341.90 M1233.62,335.50 L1227.11,335.50 L1227.11,347.50 L1233.62,347.50 M1227.11,341.23 L1231.85,341.23 M1236.23,347.50 L1236.23,335.50 L1240.96,335.50 L1242.50,336.30 L1243.33,338.03 L1243.33,339.50 L1242.50,341.23 L1240.96,341.90 L1236.23,341.90 M1240.37,341.90 L1243.33,347.50 M1252.45,347.50 L1252.45,335.50 L1257.19,335.50 L1258.73,336.30 L1259.55,338.03 L1259.55,339.50 L1258.73,341.23 L1257.19,341.90 L1252.45,341.90 M1262.16,335.50 L1262.16,347.50 L1268.08,347.50 M1270.69,347.50 L1274.24,335.50 L1277.79,347.50 M1271.87,343.50 L1276.61,343.50 M1280.40,347.50 L1280.40,335.50 L1287.50,347.50 L1287.50,335.50" stroke="#0a0a0a" stroke-width="1.05" fill="none" stroke-linecap="round" stroke-linejoin="round"/><path d="M1217.40,424.60 L1217.40,436.40 M1224.38,424.60 L1224.38,436.40 M1217.40,430.24 L1224.38,430.24 M1233.93,426.83 L1233.00,425.12 L1231.37,424.60 L1229.27,424.60 L1227.88,425.12 L1227.06,426.44 L1227.06,428.27 L1227.88,429.58 L1229.27,430.24 L1231.60,430.76 L1233.00,431.42 L1233.81,432.73 L1233.81,434.56 L1233.00,435.88 L1231.37,436.40 L1229.27,436.40 L1227.88,435.88 L1226.94,434.30 M1243.47,426.83 L1242.54,425.12 L1240.91,424.60 L1238.82,424.60 L1237.42,425.12 L1236.61,426.44 L1236.61,428.27 L1237.42,429.58 L1238.82,430.24 L1241.14,430.76 L1242.54,431.42 L1243.36,432.73 L1243.36,434.56 L1242.54,435.88 L1240.91,436.40 L1238.82,436.40 L1237.42,435.88 L1236.49,434.30 M1250.92,436.40 L1250.92,424.60 L1246.03,432.73 L1253.02,432.73 M1255.58,428.53 L1261.40,436.40 M1261.40,428.53 L1255.58,436.40 M1268.85,436.40 L1268.85,424.60 L1263.96,432.73 L1270.94,432.73 M1273.50,428.53 L1279.32,436.40 M1279.32,428.53 L1273.50,436.40 M1282.23,426.96 L1283.98,425.78 L1285.38,424.60 L1285.38,436.40 M1293.76,423.55 L1287.94,438.37 M1301.20,436.40 L1301.20,424.60 L1296.32,432.73 L1303.30,432.73" stroke="#0a0a0a" stroke-width="1.05" fill="none" stroke-linecap="round" stroke-linejoin="round"/><path d="M827.80,552.89 L826.87,551.22 L825.23,550.70 L823.13,550.70 L821.73,551.22 L820.92,552.50 L820.92,554.31 L821.73,555.60 L823.13,556.24 L825.47,556.76 L826.87,557.40 L827.69,558.69 L827.69,560.50 L826.87,561.78 L825.23,562.30 L823.13,562.30 L821.73,561.78 L820.80,560.24 M830.37,550.70 L837.37,550.70 M833.87,550.70 L833.87,562.30 M839.94,550.70 L839.94,562.30 L845.77,562.30 M854.76,550.70 L859.43,550.70 L860.83,551.34 L861.41,552.63 L861.41,554.31 L860.83,555.60 L859.43,556.24 L854.76,556.24 M859.43,556.24 L860.95,557.02 L861.76,558.43 L861.76,560.24 L860.95,561.66 L859.43,562.30 L854.76,562.30 L854.76,550.70 M864.33,562.30 L864.33,550.70 L868.42,562.30 L872.50,550.70 L872.50,562.30" stroke="#0a0a0a" stroke-width="1.05" fill="none" stroke-linecap="round" stroke-linejoin="round"/><path d="M820.80,581.20 L820.80,569.60 L825.61,569.60 L827.17,570.37 L828.02,572.05 L828.02,573.47 L827.17,575.14 L825.61,575.79 L820.80,575.79 M837.28,569.60 L830.66,569.60 L830.66,581.20 L837.28,581.20 M830.66,575.14 L835.47,575.14 M839.92,581.20 L839.92,569.60 L844.73,569.60 L846.30,570.37 L847.14,572.05 L847.14,573.47 L846.30,575.14 L844.73,575.79 L839.92,575.79 M844.13,575.79 L847.14,581.20 M856.40,581.20 L856.40,569.60 L861.21,569.60 L862.77,570.37 L863.62,572.05 L863.62,573.47 L862.77,575.14 L861.21,575.79 L856.40,575.79 M866.26,569.60 L866.26,581.20 L872.28,581.20 M874.92,581.20 L878.53,569.60 L882.14,581.20 M876.12,577.33 L880.94,577.33 M884.78,581.20 L884.78,569.60 L892.00,581.20 L892.00,569.60" stroke="#0a0a0a" stroke-width="1.05" fill="none" stroke-linecap="round" stroke-linejoin="round"/><path d="M1224.28,620.22 L1223.58,618.65 L1222.18,617.60 L1219.86,617.60 L1218.35,618.65 L1217.53,620.48 L1217.30,623.50 L1217.53,626.52 L1218.35,628.35 L1219.86,629.40 L1222.18,629.40 L1223.58,628.35 L1224.28,626.78 M1226.83,629.40 L1230.32,617.60 L1233.81,629.40 M1228.00,625.47 L1232.65,625.47 M1236.37,629.40 L1236.37,617.60 L1243.34,629.40 L1243.34,617.60 M1245.90,617.60 L1252.88,617.60 M1249.39,617.60 L1249.39,629.40 M1261.83,617.60 L1255.44,617.60 L1255.44,629.40 L1261.83,629.40 M1255.44,623.24 L1260.09,623.24 M1264.39,617.60 L1264.39,629.40 L1267.88,629.40 L1269.85,628.61 L1271.02,626.52 L1271.37,623.50 L1271.02,620.48 L1269.85,618.39 L1267.88,617.60 L1264.39,617.60 M1287.29,619.83 L1286.36,618.12 L1284.74,617.60 L1282.64,617.60 L1281.25,618.12 L1280.43,619.44 L1280.43,621.27 L1281.25,622.58 L1282.64,623.24 L1284.97,623.76 L1286.36,624.42 L1287.18,625.73 L1287.18,627.56 L1286.36,628.88 L1284.74,629.40 L1282.64,629.40 L1281.25,628.88 L1280.32,627.30 M1289.85,617.60 L1296.83,617.60 M1293.34,617.60 L1293.34,629.40 M1299.39,617.60 L1299.39,629.40 L1305.20,629.40" stroke="#0a0a0a" stroke-width="1.05" fill="none" stroke-linecap="round" stroke-linejoin="round"/><path d="M1217.30,636.60 L1222.14,636.60 L1223.59,637.26 L1224.19,638.57 L1224.19,640.27 L1223.59,641.58 L1222.14,642.24 L1217.30,642.24 M1222.14,642.24 L1223.71,643.02 L1224.56,644.47 L1224.56,646.30 L1223.71,647.74 L1222.14,648.40 L1217.30,648.40 L1217.30,636.60 M1227.22,648.40 L1227.22,636.60 L1231.45,648.40 L1235.68,636.60 L1235.68,648.40 M1245.00,648.40 L1245.00,636.60 L1249.84,636.60 L1251.41,637.39 L1252.25,639.09 L1252.25,640.53 L1251.41,642.24 L1249.84,642.89 L1245.00,642.89 M1261.57,636.60 L1254.92,636.60 L1254.92,648.40 L1261.57,648.40 M1254.92,642.24 L1259.75,642.24 M1264.23,648.40 L1264.23,636.60 L1269.07,636.60 L1270.64,637.39 L1271.49,639.09 L1271.49,640.53 L1270.64,642.24 L1269.07,642.89 L1264.23,642.89 M1268.46,642.89 L1271.49,648.40 M1280.80,648.40 L1280.80,636.60 L1285.64,636.60 L1287.21,637.39 L1288.06,639.09 L1288.06,640.53 L1287.21,642.24 L1285.64,642.89 L1280.80,642.89 M1290.72,636.60 L1290.72,648.40 L1296.76,648.40 M1299.43,648.40 L1303.05,636.60 L1306.68,648.40 M1300.63,644.47 L1305.47,644.47 M1309.34,648.40 L1309.34,636.60 L1316.60,648.40 L1316.60,636.60" stroke="#0a0a0a" stroke-width="1.05" fill="none" stroke-linecap="round" stroke-linejoin="round"/><path d="M942.58,369.26 L944.45,368.23 L945.95,367.20 L945.95,377.50 M954.95,366.28 L948.70,379.22 M962.95,377.50 L962.95,367.20 L957.70,374.30 L965.20,374.30" stroke="#7ae8f2" stroke-width="1.1" fill="none" stroke-linecap="round" stroke-linejoin="round"/><path d="M942.58,388.50 L944.45,387.45 L945.95,386.40 L945.95,396.90 M954.95,385.47 L948.70,398.65 M962.95,396.90 L962.95,386.40 L957.70,393.63 L965.20,393.63" stroke="#7ae8f2" stroke-width="1.1" fill="none" stroke-linecap="round" stroke-linejoin="round"/><path d="M984.85,174.50 L979.85,174.50 L979.23,178.06 L980.60,177.52 L982.35,177.34 L984.10,177.88 L985.10,179.21 L985.10,180.72 L984.10,182.06 L982.23,182.50 L980.23,182.32 L978.85,181.34" stroke="#7ae8f2" stroke-width="1.1" fill="none" stroke-linecap="round" stroke-linejoin="round"/><path d="M973.08,193.71 L972.32,192.48 L970.99,192.10 L969.29,192.10 L968.16,192.48 L967.49,193.42 L967.49,194.74 L968.16,195.69 L969.29,196.16 L971.18,196.54 L972.32,197.01 L972.98,197.96 L972.98,199.28 L972.32,200.22 L970.99,200.60 L969.29,200.60 L968.16,200.22 L967.40,199.09 M975.54,192.10 L979.89,192.10 L977.62,195.50 L978.75,195.59 L979.70,196.26 L980.08,197.58 L979.89,199.18 L979.04,200.22 L977.62,200.60 L976.20,200.41 L975.16,199.47 M982.44,199.94 L982.44,200.60 M985.09,193.80 L986.51,192.95 L987.64,192.10 L987.64,200.60 M993.70,200.60 L993.70,192.10 L989.72,197.96 L995.40,197.96" stroke="#7ae8f2" stroke-width="1.1" fill="none" stroke-linecap="round" stroke-linejoin="round"/></g></svg>
<svg style="left:1298px;top:178px;" width="56" height="20" viewBox="0 0 56 20">
      <rect x="3" y="8.6" width="10.5" height="4.5" rx="1.5" fill="#f4f4f4" stroke="#8a8a8a" stroke-width="1.3"/>
      <rect x="25.5" y="3.5" width="8" height="8" fill="#f4f4f4" stroke="#7a7a7a" stroke-width="1.4"/>
      <rect x="22.5" y="6.5" width="8" height="7.5" fill="#f4f4f4" stroke="#7a7a7a" stroke-width="1.4"/>
      <path d="M43,5 L51,13 M51,5 L43,13" stroke="#7a7a7a" stroke-width="3.6"/>
      <path d="M43,5 L51,13 M51,5 L43,13" stroke="#f4f4f4" stroke-width="1.3"/></svg>
<div class="a" style="left:1324.3px;top:197.2px;width:35px;height:133.6px;background:rgba(210,210,214,0.42);border:1.5px solid rgba(170,170,175,0.6);border-radius:6px;"></div>
<div class="a" style="left:1326px;top:199px;width:31.5px;height:12px;background:rgba(170,170,176,0.45);border-radius:5px 5px 0 0;"></div>
<svg style="left:1324px;top:197px;" width="36" height="134" viewBox="0 0 36 134">
      <circle cx="28" cy="8" r="3" stroke="#c6c6c8" stroke-width="1" fill="none"/>
      <path d="M6,30 C6,20 22,18 24,28 C26,36 14,40 10,34" stroke="#c9c9cc" stroke-width="2" fill="none"/>
      <circle cx="14" cy="30" r="4" stroke="#c9c9cc" stroke-width="1.5" fill="none"/>
      <path d="M10,62 V52 M14,62 V50 M18,62 V51 M22,64 V54 M10,62 C8,70 14,76 20,74 C24,72 24,68 22,64" stroke="#cdcdd0" stroke-width="1.6" fill="none"/>
      <path d="M6,76 L22,92 M22,76 L6,92 M6,76 H11 M6,76 V81 M22,92 H17 M22,92 V87" stroke="#c6c6c8" stroke-width="1.6" fill="none"/>
      <circle cx="24" cy="95" r="4" stroke="#c6c6c8" stroke-width="1.6" fill="none"/><path d="M27,98 L32,103" stroke="#c6c6c8" stroke-width="2"/>
      <path d="M20,112 L23,115 L26,112 Z" fill="#c0c0c2"/>
      <circle cx="29" cy="126" r="3" stroke="#c6c6c8" stroke-width="1" fill="none"/></svg>
<svg style="left:0;top:0" width="1366" height="754" viewBox="0 0 1366 754"><path d="M1327.34,220.00 L1327.34,212.50 L1323.50,217.67 L1328.98,217.67 M1331.36,212.50 L1331.17,214.50 M1333.00,212.50 L1332.82,214.50" stroke="#111" stroke-width="1.0" fill="none" stroke-linecap="round" stroke-linejoin="round"/><path d="M1329.30,236.80 L1330.80,235.90 L1332.00,235.00 L1332.00,244.00" stroke="#7ae8f2" stroke-width="1.0" fill="none" stroke-linecap="round" stroke-linejoin="round"/><path d="M1315.25,257.70 L1314.42,256.40 L1312.96,256.00 L1311.08,256.00 L1309.83,256.40 L1309.10,257.40 L1309.10,258.80 L1309.83,259.80 L1311.08,260.30 L1313.17,260.70 L1314.42,261.20 L1315.15,262.20 L1315.15,263.60 L1314.42,264.60 L1312.96,265.00 L1311.08,265.00 L1309.83,264.60 L1309.00,263.40 M1317.96,256.00 L1322.75,256.00 L1320.25,259.60 L1321.50,259.70 L1322.54,260.40 L1322.96,261.80 L1322.75,263.50 L1321.81,264.60 L1320.25,265.00 L1318.69,264.80 L1317.54,263.80 M1325.56,264.30 L1325.56,265.00 M1328.48,257.80 L1330.04,256.90 L1331.29,256.00 L1331.29,265.00 M1334.00,256.00 L1338.79,256.00 L1336.29,259.60 L1337.54,259.70 L1338.58,260.40 L1339.00,261.80 L1338.79,263.50 L1337.85,264.60 L1336.29,265.00 L1334.73,264.80 L1333.58,263.80" stroke="#7ae8f2" stroke-width="1.0" fill="none" stroke-linecap="round" stroke-linejoin="round"/><g transform="rotate(-62 1318 194)"><path d="M1318.81,192.00 L1314.96,192.00 L1314.48,195.11 L1315.54,194.64 L1316.88,194.49 L1318.23,194.96 L1319.00,196.12 L1319.00,197.44 L1318.23,198.61 L1316.79,199.00 L1315.25,198.84 L1314.19,197.99" stroke="#111" stroke-width="1.0" fill="none" stroke-linecap="round" stroke-linejoin="round"/></g></svg>
<!-- acad_bottom -->
<div class="a" style="left:690px;top:642px;width:52px;height:27px;background:rgba(112,116,124,0.78);"></div>
<div class="a" style="left:690px;top:642px;width:672px;height:1px;background:#555a62;"></div>
<div class="a" style="left:742px;top:643px;width:621px;height:25px;background:rgba(255,255,255,0.68);border-radius:4px 0 0 0;"></div>
<svg style="left:690px;top:643px;" width="672" height="25" viewBox="0 0 672 25">
      <path d="M3,4 V20" stroke="#e8e8e8" stroke-width="2" stroke-dasharray="2,2"/>
      <path d="M10,8 L20,18 M20,8 L10,18" stroke="#e6e8ec" stroke-width="2.2"/>
      <path d="M36,20 L50,6 M46,4 L52,10" stroke="#dcdfe4" stroke-width="2.6"/>
      <rect x="56.5" y="7.5" width="15" height="11" fill="none" stroke="#777" stroke-width="1.2"/>
      <rect x="56.5" y="7.5" width="15" height="2.5" fill="#888"/>
      <path d="M59,12 L61.5,13.5 L59,15 M62,16 H66" stroke="#666" stroke-width="0.9" fill="none"/>
      <path d="M74,11 H82 L78,15 Z" fill="#888"/>
      <path d="M663.5,14 L667,10 L670.5,14 Z" fill="#9a9a9a"/></svg>
<div class="t" style="left:777.25px;top:650.00px;font-size:12.5px;color:#b4b4b4;font-family:'Liberation Mono',monospace;font-style:italic;transform:scaleX(0.9402);transform-origin:1.25px 0;">Type a command</div>
<div class="a" style="left:690px;top:668px;width:672px;height:5px;background:#2c323c;"></div>
<svg style="left:690px;top:668px;" width="672" height="38" viewBox="0 0 672 38">
      <path d="M95.9,28.7 L105.4,5 H174 L164.4,28.7 Z" fill="#3b4351"/>
      <path d="M12.7,11 H29.3 M12.7,18 H29.3 M12.7,22.5 H29.3" stroke="#eef0f3" stroke-width="1.6"/>
      <path d="M40,25 L46,9 M232,25 L238,9 M274,25 L280,9" stroke="#5d6470" stroke-width="1"/>
      <path d="M249,17 H263 M256,10 V24" stroke="#f0f2f5" stroke-width="1.8"/></svg>
<div class="t" style="left:744.40px;top:680.02px;font-size:12.5px;color:#e6e9ee;font-family:'Liberation Sans',sans-serif;transform:scaleX(1.0420);transform-origin:1.00px 0;">Model</div>
<div class="t" style="left:802.55px;top:680.02px;font-size:12.5px;color:#f4f6f8;font-family:'Liberation Sans',sans-serif;font-weight:bold;transform:scaleX(0.9110);transform-origin:0.85px 0;">Layout1</div>
<div class="t" style="left:870.60px;top:680.02px;font-size:12.5px;color:#e6e9ee;font-family:'Liberation Sans',sans-serif;transform:scaleX(0.9638);transform-origin:1.00px 0;">Layout2</div>
<div class="a" style="left:993.3px;top:675px;width:39.6px;height:24px;background:#3b4250;"></div>
<div class="t" style="left:994.70px;top:682.44px;font-size:12px;color:#f2f4f6;font-family:'Liberation Sans',sans-serif;font-weight:bold;transform:scaleX(0.8640);transform-origin:0.80px 0;">PAPER</div>
<div class="a" style="left:1036px;top:675px;width:104px;height:24px;background:#3b4250;"></div>
<div class="a" style="left:1061px;top:675px;width:22px;height:24px;background:#5a88c4;"></div>
<div class="a" style="left:1141.7px;top:675px;width:21.8px;height:24px;background:#5a88c4;"></div>
<div class="a" style="left:1166.5px;top:675px;width:21.3px;height:24px;background:#5a88c4;"></div>
<div class="a" style="left:1163.5px;top:675px;width:3px;height:24px;background:#3b4250;"></div>
<div class="a" style="left:1188px;top:675px;width:16px;height:24px;background:#3b4250;"></div>
<div class="a" style="left:1208px;top:675px;width:69px;height:24px;background:#3b4250;"></div>
<div class="a" style="left:1283px;top:675px;width:39px;height:24px;background:#3b4250;"></div>
<div class="a" style="left:1324px;top:675px;width:10px;height:24px;background:#3b4250;"></div>
<div class="a" style="left:1336px;top:675px;width:24px;height:24px;background:#3b4250;"></div>
<svg style="left:1036px;top:675px;" width="330" height="24" viewBox="0 0 330 24">
      <path d="M4.5,3.5 V19.5 H20" stroke="#e8eaee" stroke-width="1.2" fill="none"/><path d="M4.5,14 H9 V19.5" stroke="#e8eaee" stroke-width="1" fill="none"/>
      <circle cx="35" cy="13" r="6" stroke="#fff" stroke-width="1.3" fill="none"/><path d="M29,13 H46 M35,13 L44,4" stroke="#fff" stroke-width="1.3" fill="none"/>
      <path d="M51,9 H57 L54,12 Z M91,9 H97 L94,12 Z M159,9 H165 L162,12 Z M224,9 H232 L228,13 Z" fill="#e6e8ec"/>
      <path d="M68,4 L77,21" stroke="#e03a4a" stroke-width="1.1"/><path d="M73,3 V21" stroke="#38c060" stroke-width="1.1"/><rect x="71.5" y="11" width="3" height="3" fill="#fff"/>
      <path d="M112,18 H124 M112,18 L122,8" stroke="#fff" stroke-width="1.4" fill="none"/><rect x="114" y="14.5" width="3" height="3" fill="#fff"/>
      <rect x="133" y="6.5" width="14" height="13" stroke="#fff" stroke-width="1.2" fill="none"/><rect x="131" y="3" width="5" height="5" stroke="#fff" stroke-width="1.1" fill="#5a88c4"/>
      <rect x="178" y="5" width="14" height="14" stroke="#e8eaee" stroke-width="1.1" stroke-dasharray="3,2" fill="none"/><rect x="182" y="9.5" width="7" height="7" stroke="#e8eaee" stroke-width="1.1" fill="none"/><path d="M176,3 L183,10" stroke="#e8eaee" stroke-width="1.1"/>
      <path d="M200,20 L206,6 L212,20 L206,15 Z M222,20 L228,6 L234,20 L228,15 Z" fill="#dfe2e6"/><circle cx="213" cy="7" r="2.5" stroke="#dfe2e6" stroke-width="1" fill="none"/><path d="M233,4 L235,8 L232,9" stroke="#dfe2e6" stroke-width="1" fill="none"/>
      <path d="M267.81,10.25 L267.81,13.75 L265.43,14.04 L265.28,14.39 L266.76,16.29 L264.29,18.76 L262.39,17.28 L262.04,17.43 L261.75,19.81 L258.25,19.81 L257.96,17.43 L257.61,17.28 L255.71,18.76 L253.24,16.29 L254.72,14.39 L254.57,14.04 L252.19,13.75 L252.19,10.25 L254.57,9.96 L254.72,9.61 L253.24,7.71 L255.71,5.24 L257.61,6.72 L257.96,6.57 L258.25,4.19 L261.75,4.19 L262.04,6.57 L262.39,6.72 L264.29,5.24 L266.76,7.71 L265.28,9.61 L265.43,9.96 Z" fill="#e6e8ec"/><circle cx="260" cy="12" r="2.6" fill="#3b4250"/>
      <path d="M275,9 H283 L279,13 Z" fill="#e6e8ec"/>
      <path d="M291,12 H296" stroke="#e6e8ec" stroke-width="2"/>
      <path d="M304,6 H320 M304,12 H320 M304,18 H320" stroke="#eef0f3" stroke-width="1.8"/></svg>
<!-- revu_top -->
<div class="t" style="left:12.55px;top:-5.75px;font-size:14px;color:#a2a2a2;font-family:'Liberation Sans',sans-serif;transform:scaleX(0.9787);transform-origin:1.15px 0;">Revu</div>
<div class="t" style="left:72.25px;top:-5.75px;font-size:14px;color:#a2a2a2;font-family:'Liberation Sans',sans-serif;transform:scaleX(0.9952);transform-origin:1.15px 0;">File</div>
<div class="t" style="left:124.05px;top:-5.75px;font-size:14px;color:#a2a2a2;font-family:'Liberation Sans',sans-serif;transform:scaleX(0.9978);transform-origin:1.15px 0;">Edit</div>
<div class="t" style="left:178.95px;top:-5.75px;font-size:14px;color:#a2a2a2;font-family:'Liberation Sans',sans-serif;transform:scaleX(0.9318);transform-origin:0.05px 0;">View</div>
<div class="t" style="left:233.85px;top:-5.75px;font-size:14px;color:#a2a2a2;font-family:'Liberation Sans',sans-serif;transform:scaleX(1.0080);transform-origin:1.15px 0;">Document</div>
<div class="t" style="left:320.70px;top:-5.75px;font-size:14px;color:#a2a2a2;font-family:'Liberation Sans',sans-serif;transform:scaleX(1.1774);transform-origin:0.30px 0;">Tools</div>
<div class="t" style="left:387.95px;top:-5.75px;font-size:14px;color:#a2a2a2;font-family:'Liberation Sans',sans-serif;transform:scaleX(0.9648);transform-origin:0.05px 0;">Window</div>
<div class="t" style="left:465.35px;top:-5.75px;font-size:14px;color:#a2a2a2;font-family:'Liberation Sans',sans-serif;transform:scaleX(0.9963);transform-origin:1.15px 0;">Help</div>
<div class="t" style="left:510.95px;top:-5.75px;font-size:14px;color:#ffffff;font-family:'Liberation Sans',sans-serif;font-weight:bold;transform:scaleX(0.8534);transform-origin:0.95px 0;">lc.edu</div>
<svg style="left:600px;top:0px;" width="80" height="14" viewBox="0 0 80 14"><path d="M11.5,-3 V3.5 H23.5 V-3" stroke="#e8e8e8" stroke-width="1.2" fill="none"/>
      <path d="M57,-3 L69,5 M69,-3 L57,5" stroke="#f0f0f0" stroke-width="1.4"/></svg>
<svg style="left:3px;top:19px;" width="45" height="25" viewBox="0 0 45 25"><rect x="0.5" y="0.5" width="43.5" height="24" rx="3" fill="none" stroke="#7a7a7a" stroke-width="1"/>
      <path d="M5.5,3.5 H14 L18.5,8 V21.5 H5.5 Z M14,3.5 V8 H18.5" stroke="#e6e6e6" stroke-width="1.1" fill="none"/>
      <rect x="9" y="13" width="6" height="5" stroke="#e6e6e6" stroke-width="1" fill="none"/>
      <path d="M30,10.5 L34,14.5 L38,10.5" stroke="#e6e6e6" stroke-width="1.2" fill="none"/></svg>
<div class="t" style="left:56.45px;top:26.02px;font-size:12.5px;color:#f2f2f2;font-family:'Liberation Sans',sans-serif;font-weight:bold;transform:scaleX(0.8990);transform-origin:0.35px 0;">Session:</div>
<div class="t" style="left:104.40px;top:26.02px;font-size:12.5px;color:#f2f2f2;font-family:'Liberation Sans',sans-serif;transform:scaleX(0.9247);transform-origin:1.00px 0;">Redline 1</div>
<div class="t" style="left:163.65px;top:26.02px;font-size:12.5px;color:#f2f2f2;font-family:'Liberation Sans',sans-serif;font-weight:bold;transform:scaleX(0.9828);transform-origin:0.85px 0;">ID:</div>
<div class="t" style="left:181.85px;top:26.02px;font-size:12.5px;color:#f2f2f2;font-family:'Liberation Sans',sans-serif;transform:scaleX(0.9817);transform-origin:0.95px 0;">135-511-721</div>
<div class="t" style="left:260.45px;top:26.02px;font-size:12.5px;color:#f2f2f2;font-family:'Liberation Sans',sans-serif;font-weight:bold;transform:scaleX(0.9030);transform-origin:0.85px 0;">Name:</div>
<div class="t" style="left:296.00px;top:26.02px;font-size:12.5px;color:#f2f2f2;font-family:'Liberation Sans',sans-serif;transform:scaleX(0.9561);transform-origin:1.00px 0;">Redline Lab1.pdf</div>
<div class="t" style="left:396.15px;top:26.02px;font-size:12.5px;color:#f2f2f2;font-family:'Liberation Sans',sans-serif;font-weight:bold;transform:scaleX(0.9357);transform-origin:0.85px 0;">Pages:</div>
<div class="t" style="left:435.40px;top:26.02px;font-size:12.5px;color:#f2f2f2;font-family:'Liberation Sans',sans-serif;transform:scaleX(1.1579);transform-origin:0.60px 0;">2</div>
<svg style="left:37px;top:60px;" width="20" height="14" viewBox="0 0 20 14"><rect x="0.5" y="0.5" width="18.5" height="13" fill="#f4f4f4"/>
      <path d="M0.5,1.5 H19 M0.5,4 H19 M0.5,6.5 H19 M0.5,9 H19 M0.5,11.5 H19" stroke="#d03a3a" stroke-width="1.2"/>
      <rect x="0.5" y="0.5" width="8.5" height="7" fill="#3a5aa8"/>
      <path d="M2,2 h1 M5,2 h1 M3.5,3.5 h1 M6.5,3.5 h1 M2,5 h1 M5,5 h1" stroke="#fff" stroke-width="0.8"/></svg>
<div class="t" style="left:63.00px;top:61.25px;font-size:14px;color:#f2f2f2;font-family:'Liberation Sans',sans-serif;font-weight:bold;transform:scaleX(0.9800);transform-origin:0.40px 0;">Studio</div>
<svg style="left:110px;top:64px;" width="12" height="8" viewBox="0 0 12 8"><path d="M1.5,1.5 L6,6 L10.5,1.5" stroke="#cfcfcf" stroke-width="1.1" fill="none"/></svg>
<svg style="left:133px;top:59px;" width="20" height="18" viewBox="0 0 20 18"><rect x="0.8" y="0.8" width="17.5" height="16" stroke="#e6e6e6" stroke-width="1.2" fill="none"/>
      <path d="M4,5 H10 M6,8.5 H15 M6,11.5 H13 M4,14 H9" stroke="#e6e6e6" stroke-width="1.1"/></svg>
<div class="a" style="left:160.5px;top:50px;width:35.5px;height:34px;background:#1c5c8c;"></div>
<svg style="left:160px;top:50px;" width="36" height="34" viewBox="0 0 36 34"><rect x="10.5" y="9" width="15" height="12" stroke="#fff" stroke-width="1.3" fill="none"/>
      <path d="M10.5,21 H25.5 M11.5,21 V26.5 M24.5,21 V26.5 M9,26.5 H13 M23,26.5 H27 M13,18.5 H15.5" stroke="#fff" stroke-width="1.3" fill="none"/></svg>
<div class="t" style="left:205.55px;top:61.70px;font-size:13px;color:#f2f2f2;font-family:'Liberation Sans',sans-serif;transform:scaleX(0.9359);transform-origin:0.85px 0;">ltorrescamacho@st...</div>
<svg style="left:328px;top:58px;" width="22" height="20" viewBox="0 0 22 20"><path d="M1.5,18 L19.5,1.5" stroke="#d8d8d8" stroke-width="1.1"/>
      <ellipse cx="10.5" cy="9.5" rx="5" ry="4" transform="rotate(-42 10.5 9.5)" stroke="#d8d8d8" stroke-width="1.2" fill="#2e2e2e"/>
      <path d="M6.5,8 L13,12.5" stroke="#d8d8d8" stroke-width="1.1"/>
      <circle cx="17" cy="17" r="1.8" fill="#b8d84a"/></svg>
<div class="t" style="left:36.25px;top:97.00px;font-size:13px;color:#f2f2f2;font-family:'Liberation Sans',sans-serif;font-weight:bold;transform:scaleX(0.9408);transform-origin:0.85px 0;">Redline 1 - 135-511-721</div>
<svg style="left:176px;top:99px;" width="10" height="7" viewBox="0 0 10 7"><path d="M1,1 L5,5 L9,1" stroke="#cfcfcf" stroke-width="1.1" fill="none"/></svg>
<svg style="left:289px;top:95px;" width="20" height="18" viewBox="0 0 20 18"><path d="M1.3,0.6 H12.9 V4.8 M12.9,10.2 V14.9 H7.5" stroke="#ececec" stroke-width="1.2" fill="none"/>
      <path d="M1.3,0.6 L7.5,2 V17.2 L1.3,15 Z" stroke="#ececec" stroke-width="1.2" fill="none" stroke-linejoin="round"/>
      <path d="M9,7.5 H18.3 M15.8,4.6 L18.6,7.5 L15.8,10.4" stroke="#ececec" stroke-width="1.2" fill="none"/></svg>
<svg style="left:325px;top:95px;" width="18" height="17" viewBox="0 0 18 17"><path d="M2.5,0.5 V16 M8.5,0.5 V16 M14.5,0.5 V16" stroke="#d0d0d0" stroke-width="1"/>
      <circle cx="2.5" cy="5" r="1.8" fill="#2e2e2e" stroke="#d0d0d0" stroke-width="1"/>
      <circle cx="8.5" cy="11" r="1.8" fill="#2e2e2e" stroke="#d0d0d0" stroke-width="1"/>
      <circle cx="14.5" cy="5" r="1.8" fill="#2e2e2e" stroke="#d0d0d0" stroke-width="1"/></svg>
<div class="t" style="left:42.15px;top:125.40px;font-size:13px;color:#f2f2f2;font-family:'Liberation Sans',sans-serif;transform:scaleX(0.9518);transform-origin:1.05px 0;">My Status:</div>
<div class="a" style="left:106.6px;top:122.5px;width:239px;height:21px;background:#2e2e2e;border:1px solid #8c8c8c;border-top:2px solid #9a9a9a;border-radius:0 3px 3px 0;"></div>
<div class="a" style="left:331px;top:123.5px;width:1px;height:19px;background:#8c8c8c;"></div>
<svg style="left:333px;top:128px;" width="12" height="10" viewBox="0 0 12 10"><path d="M1.5,2.5 L6,7 L10.5,2.5" stroke="#d0d0d0" stroke-width="1.1" fill="none"/></svg>
<div class="t" style="left:111.80px;top:125.40px;font-size:13px;color:#f2f2f2;font-family:'Liberation Sans',sans-serif;transform:scaleX(0.9615);transform-origin:0.90px 0;">hello</div>
<div class="a" style="left:356px;top:50px;width:142.4px;height:34.5px;background:#474747;"></div>
<svg style="left:366px;top:58px;" width="20" height="20" viewBox="0 0 20 20"><rect x="1.5" y="1.5" width="16" height="12.5" stroke="#eee" stroke-width="1.2" fill="none"/>
      <path d="M1.5,14 H17.5 M2.5,14 V18.5 M16.5,14 V18.5 M0.5,18.5 H4.5 M14.5,18.5 H18.5 M4,11.5 H6.5" stroke="#eee" stroke-width="1.2" fill="none"/></svg>
<div class="t" style="left:389.95px;top:60.70px;font-size:13px;color:#eeeeee;font-family:'Liberation Sans',sans-serif;transform:scaleX(0.9132);transform-origin:1.05px 0;">Redline Lab1</div>
<svg style="left:475px;top:61px;" width="13" height="13" viewBox="0 0 13 13"><path d="M1,1.5 L11.5,11.5 M11.5,1.5 L1,11.5" stroke="#eeeeee" stroke-width="1.3"/></svg>
<svg style="left:617px;top:62px;" width="12" height="8" viewBox="0 0 12 8"><path d="M1.5,1.5 L6,6 L10.5,1.5" stroke="#eeeeee" stroke-width="1.3" fill="none"/></svg>
<!-- revu_panel -->
<div class="a" style="left:0px;top:540.4px;width:31px;height:34px;background:#1c5c8c;"></div>
<svg style="left:0px;top:55px;" width="31" height="24" viewBox="0 0 31 24"><rect x="6.5" y="3.5" width="13" height="17" stroke="#e8e8e8" stroke-width="1.2" fill="none"/><path d="M6.5,12 H19.5 M11,7 H15 M11,15.5 H15" stroke="#e8e8e8" stroke-width="1.1"/></svg>
<svg style="left:0px;top:89px;" width="31" height="24" viewBox="0 0 31 24"><rect x="4.5" y="3.5" width="7" height="7" stroke="#e8e8e8" stroke-width="1.2" fill="none"/><rect x="14.5" y="3.5" width="7" height="7" stroke="#e8e8e8" stroke-width="1.2" fill="none"/><rect x="4.5" y="13.5" width="7" height="7" stroke="#e8e8e8" stroke-width="1.2" fill="none"/><rect x="14.5" y="13.5" width="7" height="7" stroke="#e8e8e8" stroke-width="1.2" fill="none"/></svg>
<svg style="left:0px;top:125px;" width="31" height="24" viewBox="0 0 31 24"><path d="M6.5,3.5 H19.5 V21 H6.5 Z M10,3.5 V12 L12.3,10 L14.5,12 V3.5" stroke="#e8e8e8" stroke-width="1.2" fill="none"/></svg>
<svg style="left:0px;top:160px;" width="31" height="24" viewBox="0 0 31 24"><path d="M12.5,2 L21,7.5 L12.5,13 L4,7.5 Z M4,11.5 L12.5,17 L21,11.5" stroke="#e8e8e8" stroke-width="1.3" fill="none" stroke-linejoin="round"/></svg>
<svg style="left:0px;top:194px;" width="31" height="24" viewBox="0 0 31 24"><rect x="4" y="7" width="18" height="12.5" rx="1" stroke="#e8e8e8" stroke-width="1.2" fill="none"/><path d="M9.5,7 V4 H16.5 V7 M4,12 H22 M11,11 V13.5 M15,11 V13.5" stroke="#e8e8e8" stroke-width="1.2" fill="none"/></svg>
<svg style="left:0px;top:231px;" width="31" height="24" viewBox="0 0 31 24"><path d="M12.5,18 C8,12 6.5,9.5 6.5,7.5 A6,6 0 0 1 18.5,7.5 C18.5,9.5 17,12 12.5,18 Z" stroke="#e8e8e8" stroke-width="1.2" fill="none"/><circle cx="12.5" cy="7.5" r="2" stroke="#e8e8e8" stroke-width="1.1" fill="none"/><path d="M8,15 C3,16 3,20 12.5,20.5 C22,20 22,16 17,15" stroke="#e8e8e8" stroke-width="1.1" fill="none"/></svg>
<svg style="left:0px;top:265px;" width="31" height="24" viewBox="0 0 31 24"><path d="M4.5,4 H21 V17 H11 V21 H4.5 Z M13,4 V9 H16 M4.5,13 H9 V17 H11 M16,13 H21" stroke="#e8e8e8" stroke-width="1.2" fill="none"/></svg>
<svg style="left:0px;top:300px;" width="31" height="24" viewBox="0 0 31 24"><circle cx="12.5" cy="12" r="4" stroke="#e8e8e8" stroke-width="1.2" fill="none"/><circle cx="12.5" cy="12" r="7.5" stroke="#e8e8e8" stroke-width="3" fill="none" stroke-dasharray="3,2.9"/><circle cx="12.5" cy="12" r="6.5" stroke="#e8e8e8" stroke-width="1.2" fill="none"/></svg>
<svg style="left:0px;top:334px;" width="31" height="24" viewBox="0 0 31 24"><rect x="4" y="7" width="18" height="10" stroke="#e8e8e8" stroke-width="1.2" fill="none"/><path d="M8,7 V11 M11.5,7 V12.5 M15,7 V11 M18.5,7 V12.5" stroke="#e8e8e8" stroke-width="1.1"/></svg>
<svg style="left:0px;top:369px;" width="31" height="24" viewBox="0 0 31 24"><path d="M18,6 V4 H5 V21 H18 V15" stroke="#e8e8e8" stroke-width="1.2" fill="none"/><path d="M8,8 H15 M8,11.5 H13 M8,15 H12" stroke="#e8e8e8" stroke-width="1.1"/><path d="M13,17 L21,8 L23,10 L15,19 L12.5,19.5 Z" stroke="#e8e8e8" stroke-width="1.1" fill="none"/></svg>
<svg style="left:0px;top:404px;" width="31" height="24" viewBox="0 0 31 24"><path d="M7.5,17 L10,9.5 L16,6.5 L19,9.5 L16,15.5 Z M7.5,17 L12,12.5 M16,6.5 L20,2.5 M19,9.5 L22,6" stroke="#e8e8e8" stroke-width="1.2" fill="none" stroke-linejoin="round"/><circle cx="12.8" cy="11.8" r="1.3" stroke="#e8e8e8" stroke-width="1" fill="none"/><path d="M4,21 H22" stroke="#e8e8e8" stroke-width="1.2"/></svg>
<svg style="left:0px;top:440px;" width="31" height="24" viewBox="0 0 31 24"><path d="M21,6 H9 L3.5,12 L9,18 H21 Z" stroke="#e8e8e8" stroke-width="1.3" fill="none" stroke-linejoin="round"/></svg>
<svg style="left:0px;top:474px;" width="31" height="24" viewBox="0 0 31 24"><path d="M6.5,4.5 H19.5 V13 H6.5 Z M9,6.5 H17 V13 M9,6.5 V13" stroke="#e8e8e8" stroke-width="1.1" fill="none"/><path d="M3.5,13 H22.5 M3.5,15.5 H22.5 M3.5,18 H22.5 M3.5,20.5 H22.5" stroke="#e8e8e8" stroke-width="1.1" fill="none"/></svg>
<svg style="left:0px;top:509px;" width="31" height="24" viewBox="0 0 31 24"><circle cx="10.5" cy="10" r="6" stroke="#e8e8e8" stroke-width="1.4" fill="none"/><path d="M15,14.5 L21.5,21" stroke="#e8e8e8" stroke-width="1.8"/></svg>
<svg style="left:0px;top:545px;" width="31" height="24" viewBox="0 0 31 24"><path d="M4.5,8 L13.5,3.5 L22,6.5 V18 L12,22 L4.5,19.5 Z" stroke="#f2f2f2" stroke-width="1.3" fill="none" stroke-linejoin="round"/><rect x="7.5" y="14" width="5" height="5.5" stroke="#f2f2f2" stroke-width="1.2" fill="none"/></svg>
<svg style="left:42px;top:164px;" width="11" height="8" viewBox="0 0 11 8"><path d="M1,1.5 L5.5,6 L10,1.5" stroke="#cfcfcf" stroke-width="1.1" fill="none"/></svg>
<div class="t" style="left:63.55px;top:160.87px;font-size:13.5px;color:#f0f0f0;font-family:'Liberation Sans',sans-serif;transform:scaleX(1.0332);transform-origin:0.05px 0;">Attendees</div>
<div class="a" style="left:32px;top:184.9px;width:66px;height:26.4px;background:#1c5c8c;"></div>
<div class="a" style="left:32px;top:208px;width:66px;height:3.3px;background:#2a7dc0;"></div>
<div class="t" style="left:44.00px;top:191.87px;font-size:13.5px;color:#f0f0f0;font-family:'Liberation Sans',sans-serif;transform:scaleX(1.0712);transform-origin:0.20px 0;">Joined</div>
<div class="t" style="left:109.50px;top:191.87px;font-size:13.5px;color:#f0f0f0;font-family:'Liberation Sans',sans-serif;transform:scaleX(1.0604);transform-origin:1.10px 0;">Not Joined (0)</div>
<div class="a" style="left:32px;top:211.3px;width:298px;height:90px;background:#3c3c3c;"></div>
<div class="a" style="left:330px;top:211.3px;width:21px;height:90px;background:#f0f0f0;"></div>
<div class="a" style="left:337px;top:245px;width:6px;height:30.5px;background:#8a8a8a;"></div>
<svg style="left:40px;top:215px;" width="12" height="19" viewBox="0 0 12 19"><path d="M4,4.6 C1.6,2.6 3,0.4 6,0.4 C9,0.4 10.4,2.6 8,4.6 C10.4,5.5 11.1,7 11.1,8.5 C11.1,10 10.3,11 9.4,11.8 L8.8,17.2 H3.2 L2.6,11.8 C1.7,11 0.9,10 0.9,8.5 C0.9,7 1.6,5.5 4,4.6 Z" stroke="#e8e8e8" stroke-width="1.15" fill="none" stroke-linejoin="round"/></svg>
<div class="t" style="left:59.75px;top:217.72px;font-size:12.5px;color:#e8e8e8;font-family:'Liberation Sans',sans-serif;transform:scaleX(0.9932);transform-origin:0.85px 0;">instructorBiell</div>
<div class="a" style="left:44px;top:243px;width:275px;height:1.2px;background:#8a8a8a;"></div>
<div class="t" style="left:35.65px;top:255.35px;font-size:14px;color:#f0f0f0;font-family:'Liberation Sans',sans-serif;font-weight:bold;transform:scaleX(1.0406);transform-origin:0.55px 0;">Offline (2)</div>
<svg style="left:39px;top:282px;" width="14" height="14" viewBox="0 0 14 14"><circle cx="7" cy="7" r="5" stroke="#8a8a8a" stroke-width="2.2" fill="none"/></svg>
<div class="t" style="left:59.30px;top:282.02px;font-size:12.5px;color:#8d8d8d;font-family:'Liberation Sans',sans-serif;transform:scaleX(0.9834);transform-origin:1.00px 0;">KDstudent</div>
<div class="a" style="left:32px;top:301px;width:322px;height:2px;background:#111;"></div>
<svg style="left:42px;top:316px;" width="11" height="8" viewBox="0 0 11 8"><path d="M1,1.5 L5.5,6 L10,1.5" stroke="#cfcfcf" stroke-width="1.1" fill="none"/></svg>
<div class="t" style="left:62.30px;top:312.57px;font-size:13.5px;color:#f0f0f0;font-family:'Liberation Sans',sans-serif;transform:scaleX(1.0563);transform-origin:1.10px 0;">Documents</div>
<svg style="left:319px;top:309px;" width="22" height="20" viewBox="0 0 22 20"><text x="2" y="9" font-family="Liberation Sans" font-size="10" font-weight="bold" fill="#ececec">A</text>
      <text x="2.5" y="19" font-family="Liberation Sans" font-size="10" font-weight="bold" fill="#ececec">Z</text>
      <path d="M12.5,9 L15,6.5 L17.5,9 M12.5,12 L15,14.5 L17.5,12" stroke="#ececec" stroke-width="1.2" fill="none"/></svg>
<svg style="left:38px;top:340px;" width="16" height="20" viewBox="0 0 16 20"><path d="M1.5,1 H9.5 L14,5.5 V18.5 H1.5 Z M9.5,1 V5.5 H14" stroke="#e8e8e8" stroke-width="1.1" fill="none"/>
      <rect x="5" y="10" width="5.5" height="5" stroke="#e8e8e8" stroke-width="1" fill="none"/></svg>
<div class="t" style="left:59.30px;top:343.82px;font-size:12.5px;color:#f0f0f0;font-family:'Liberation Sans',sans-serif;transform:scaleX(0.9594);transform-origin:1.00px 0;">Redline Lab1.pdf</div>
<div class="a" style="left:32px;top:446px;width:319px;height:2.2px;background:#111;"></div>
<div class="a" style="left:32px;top:447.9px;width:106px;height:23.6px;background:#1c5c8c;"></div>
<div class="a" style="left:32px;top:469px;width:106px;height:2.5px;background:#2a7dc0;"></div>
<div class="t" style="left:62.70px;top:452.47px;font-size:13.5px;color:#f0f0f0;font-family:'Liberation Sans',sans-serif;transform:scaleX(1.0361);transform-origin:1.10px 0;">Record</div>
<div class="t" style="left:150.20px;top:452.47px;font-size:13.5px;color:#f0f0f0;font-family:'Liberation Sans',sans-serif;transform:scaleX(1.1113);transform-origin:1.10px 0;">Notifications</div>
<div class="t" style="left:270.20px;top:452.47px;font-size:13.5px;color:#f0f0f0;font-family:'Liberation Sans',sans-serif;transform:scaleX(1.0557);transform-origin:1.10px 0;">Pending</div>
<div class="a" style="left:329.7px;top:472.3px;width:21.5px;height:208px;background:#f0f0f0;"></div>
<div class="a" style="left:338px;top:489px;width:6px;height:29px;background:#8a8a8a;"></div>
<div class="a" style="left:32px;top:472px;width:298px;height:208px;overflow:hidden"><div class="a" style="left:-32px;top:-472px;width:400px;height:700px"><div class="t" style="left:39.00px;top:479.98px;font-size:9px;color:#e0e0e0;font-family:'Liberation Sans',sans-serif;">1</div>
<svg style="left:53px;top:477px;" width="12" height="19" viewBox="0 0 12 19"><path d="M4,4.6 C1.6,2.6 3,0.4 6,0.4 C9,0.4 10.4,2.6 8,4.6 C10.4,5.5 11.1,7 11.1,8.5 C11.1,10 10.3,11 9.4,11.8 L8.8,17.2 H3.2 L2.6,11.8 C1.7,11 0.9,10 0.9,8.5 C0.9,7 1.6,5.5 4,4.6 Z" stroke="#e8e8e8" stroke-width="1.15" fill="none" stroke-linejoin="round"/></svg>
<div class="t" style="left:71.45px;top:479.90px;font-size:15px;color:#f0f0f0;font-family:'Liberation Sans',sans-serif;font-weight:bold;transform:scaleX(0.9410);transform-origin:1.05px 0;">instructorBiell:</div>
<div class="t" style="left:178.30px;top:482.02px;font-size:12.5px;color:#e6e6e6;font-family:'Liberation Sans',sans-serif;transform:scaleX(0.9654);transform-origin:0.20px 0;">Joined Session</div>
<div class="t" style="left:39.25px;top:503.98px;font-size:9px;color:#e0e0e0;font-family:'Liberation Sans',sans-serif;">2</div>
<svg style="left:53px;top:501px;" width="12" height="19" viewBox="0 0 12 19"><path d="M4,4.6 C1.6,2.6 3,0.4 6,0.4 C9,0.4 10.4,2.6 8,4.6 C10.4,5.5 11.1,7 11.1,8.5 C11.1,10 10.3,11 9.4,11.8 L8.8,17.2 H3.2 L2.6,11.8 C1.7,11 0.9,10 0.9,8.5 C0.9,7 1.6,5.5 4,4.6 Z" stroke="#e8e8e8" stroke-width="1.15" fill="none" stroke-linejoin="round"/></svg>
<div class="t" style="left:72.05px;top:503.90px;font-size:15px;color:#f0f0f0;font-family:'Liberation Sans',sans-serif;font-weight:bold;transform:scaleX(0.9533);transform-origin:0.45px 0;">alialsaadi:</div>
<div class="t" style="left:148.40px;top:506.02px;font-size:12.5px;color:#e6e6e6;font-family:'Liberation Sans',sans-serif;transform:scaleX(0.9665);transform-origin:0.20px 0;">Joined Session</div>
<div class="t" style="left:39.35px;top:527.98px;font-size:9px;color:#e0e0e0;font-family:'Liberation Sans',sans-serif;">3</div>
<svg style="left:53px;top:525px;" width="12" height="19" viewBox="0 0 12 19"><path d="M4,4.6 C1.6,2.6 3,0.4 6,0.4 C9,0.4 10.4,2.6 8,4.6 C10.4,5.5 11.1,7 11.1,8.5 C11.1,10 10.3,11 9.4,11.8 L8.8,17.2 H3.2 L2.6,11.8 C1.7,11 0.9,10 0.9,8.5 C0.9,7 1.6,5.5 4,4.6 Z" stroke="#e8e8e8" stroke-width="1.15" fill="none" stroke-linejoin="round"/></svg>
<div class="t" style="left:71.50px;top:527.90px;font-size:15px;color:#f0f0f0;font-family:'Liberation Sans',sans-serif;font-weight:bold;transform:scaleX(0.9381);transform-origin:1.00px 0;">KDstudent:</div>
<div class="t" style="left:154.20px;top:530.02px;font-size:12.5px;color:#e6e6e6;font-family:'Liberation Sans',sans-serif;transform:scaleX(0.9665);transform-origin:0.20px 0;">Joined Session</div>
<div class="t" style="left:39.50px;top:551.98px;font-size:9px;color:#e0e0e0;font-family:'Liberation Sans',sans-serif;">4</div>
<svg style="left:49.5px;top:548.5px;" width="20" height="20" viewBox="0 0 20 20"><path d="M2.2,0.6 H16.8 Q18.4,0.6 18.4,2.2 V11.2 Q18.4,12.8 16.8,12.8 H8.9 L4,17.4 V12.8 H2.2 Q0.6,12.8 0.6,11.2 V2.2 Q0.6,0.6 2.2,0.6 Z" stroke="#f0f0f0" stroke-width="1.2" fill="none" stroke-linejoin="round"/></svg>
<div class="t" style="left:71.50px;top:551.90px;font-size:15px;color:#f0f0f0;font-family:'Liberation Sans',sans-serif;font-weight:bold;transform:scaleX(0.9381);transform-origin:1.00px 0;">KDstudent:</div>
<div class="t" style="left:153.95px;top:554.02px;font-size:12.5px;color:#e6e6e6;font-family:'Liberation Sans',sans-serif;transform:scaleX(0.9587);transform-origin:0.85px 0;">hi :D</div>
<div class="t" style="left:39.35px;top:575.98px;font-size:9px;color:#e0e0e0;font-family:'Liberation Sans',sans-serif;">5</div>
<svg style="left:53px;top:573px;" width="12" height="19" viewBox="0 0 12 19"><path d="M4,4.6 C1.6,2.6 3,0.4 6,0.4 C9,0.4 10.4,2.6 8,4.6 C10.4,5.5 11.1,7 11.1,8.5 C11.1,10 10.3,11 9.4,11.8 L8.8,17.2 H3.2 L2.6,11.8 C1.7,11 0.9,10 0.9,8.5 C0.9,7 1.6,5.5 4,4.6 Z" stroke="#e8e8e8" stroke-width="1.15" fill="none" stroke-linejoin="round"/></svg>
<div class="t" style="left:71.50px;top:575.90px;font-size:15px;color:#f0f0f0;font-family:'Liberation Sans',sans-serif;font-weight:bold;transform:scaleX(0.9381);transform-origin:1.00px 0;">KDstudent:</div>
<div class="t" style="left:153.80px;top:578.02px;font-size:12.5px;color:#e6e6e6;font-family:'Liberation Sans',sans-serif;transform:scaleX(0.9529);transform-origin:1.00px 0;">Left Session</div>
<div class="t" style="left:39.25px;top:599.98px;font-size:9px;color:#e0e0e0;font-family:'Liberation Sans',sans-serif;">6</div>
<svg style="left:53px;top:597px;" width="12" height="19" viewBox="0 0 12 19"><path d="M4,4.6 C1.6,2.6 3,0.4 6,0.4 C9,0.4 10.4,2.6 8,4.6 C10.4,5.5 11.1,7 11.1,8.5 C11.1,10 10.3,11 9.4,11.8 L8.8,17.2 H3.2 L2.6,11.8 C1.7,11 0.9,10 0.9,8.5 C0.9,7 1.6,5.5 4,4.6 Z" stroke="#e8e8e8" stroke-width="1.15" fill="none" stroke-linejoin="round"/></svg>
<div class="t" style="left:71.50px;top:599.90px;font-size:15px;color:#f0f0f0;font-family:'Liberation Sans',sans-serif;font-weight:bold;transform:scaleX(0.9381);transform-origin:1.00px 0;">KDstudent:</div>
<div class="t" style="left:154.60px;top:602.02px;font-size:12.5px;color:#e6e6e6;font-family:'Liberation Sans',sans-serif;transform:scaleX(0.9677);transform-origin:0.20px 0;">Joined Session</div>
<div class="t" style="left:39.25px;top:623.98px;font-size:9px;color:#e0e0e0;font-family:'Liberation Sans',sans-serif;">7</div>
<svg style="left:53px;top:621px;" width="12" height="19" viewBox="0 0 12 19"><path d="M4,4.6 C1.6,2.6 3,0.4 6,0.4 C9,0.4 10.4,2.6 8,4.6 C10.4,5.5 11.1,7 11.1,8.5 C11.1,10 10.3,11 9.4,11.8 L8.8,17.2 H3.2 L2.6,11.8 C1.7,11 0.9,10 0.9,8.5 C0.9,7 1.6,5.5 4,4.6 Z" stroke="#e8e8e8" stroke-width="1.15" fill="none" stroke-linejoin="round"/></svg>
<div class="t" style="left:72.05px;top:623.90px;font-size:15px;color:#f0f0f0;font-family:'Liberation Sans',sans-serif;font-weight:bold;transform:scaleX(0.9533);transform-origin:0.45px 0;">alialsaadi:</div>
<div class="t" style="left:147.00px;top:626.02px;font-size:12.5px;color:#e6e6e6;font-family:'Liberation Sans',sans-serif;transform:scaleX(0.9540);transform-origin:1.00px 0;">Reconnected</div>
<div class="t" style="left:39.30px;top:647.98px;font-size:9px;color:#e0e0e0;font-family:'Liberation Sans',sans-serif;">8</div>
<svg style="left:53px;top:645px;" width="12" height="19" viewBox="0 0 12 19"><path d="M4,4.6 C1.6,2.6 3,0.4 6,0.4 C9,0.4 10.4,2.6 8,4.6 C10.4,5.5 11.1,7 11.1,8.5 C11.1,10 10.3,11 9.4,11.8 L8.8,17.2 H3.2 L2.6,11.8 C1.7,11 0.9,10 0.9,8.5 C0.9,7 1.6,5.5 4,4.6 Z" stroke="#e8e8e8" stroke-width="1.15" fill="none" stroke-linejoin="round"/></svg>
<div class="t" style="left:72.05px;top:647.90px;font-size:15px;color:#f0f0f0;font-family:'Liberation Sans',sans-serif;font-weight:bold;transform:scaleX(0.9533);transform-origin:0.45px 0;">alialsaadi:</div>
<div class="t" style="left:147.00px;top:650.02px;font-size:12.5px;color:#e6e6e6;font-family:'Liberation Sans',sans-serif;transform:scaleX(0.9797);transform-origin:1.00px 0;">Disconnected</div>
<div class="t" style="left:39.30px;top:671.98px;font-size:9px;color:#e0e0e0;font-family:'Liberation Sans',sans-serif;">9</div>
<svg style="left:53px;top:669px;" width="12" height="19" viewBox="0 0 12 19"><path d="M4,4.6 C1.6,2.6 3,0.4 6,0.4 C9,0.4 10.4,2.6 8,4.6 C10.4,5.5 11.1,7 11.1,8.5 C11.1,10 10.3,11 9.4,11.8 L8.8,17.2 H3.2 L2.6,11.8 C1.7,11 0.9,10 0.9,8.5 C0.9,7 1.6,5.5 4,4.6 Z" stroke="#e8e8e8" stroke-width="1.15" fill="none" stroke-linejoin="round"/></svg>
<div class="t" style="left:72.05px;top:671.90px;font-size:15px;color:#f0f0f0;font-family:'Liberation Sans',sans-serif;font-weight:bold;transform:scaleX(0.9533);transform-origin:0.45px 0;">alialsaadi:</div>
<div class="t" style="left:147.00px;top:674.02px;font-size:12.5px;color:#e6e6e6;font-family:'Liberation Sans',sans-serif;transform:scaleX(0.9797);transform-origin:1.00px 0;">Disconnected</div>
</div></div>
<div class="a" style="left:35.8px;top:686.2px;width:274.2px;height:18.3px;background:#2e2e2e;border:1px solid #9a9a9a;"></div>
<div class="t" style="left:38.05px;top:688.40px;font-size:13px;color:#f0f0f0;font-family:'Liberation Sans',sans-serif;transform:scaleX(0.9568);transform-origin:0.65px 0;">Chat</div>
<svg style="left:323px;top:686px;" width="16" height="18" viewBox="0 0 16 18"><path d="M1.5,2 H14.5 L9.5,8.5 V15.5 L6.5,13.5 V8.5 Z" stroke="#e0e0e0" stroke-width="1.2" fill="none" stroke-linejoin="round"/></svg>
<!-- revu_pdf -->
<div class="a" style="left:356px;top:84px;width:270px;height:322px;overflow:hidden"><svg style="left:0;top:0" width="270" height="322" viewBox="356 84 270 322"><path d="M554.2,84 V95 H601.2 V84 M601.2,90.5 H613.8 V84" stroke="#12d812" stroke-width="2" fill="none"/><path d="M622,84 L626,90" stroke="#ff40c0" stroke-width="1"/><path d="M614.6,91 L626,108 M626,110 L607.7,125.5 H553.8 M580.5,117 V135" stroke="#6fe8f5" stroke-width="1.5" fill="none"/><path d="M587,116 C582,120 582,131 587,135" stroke="#6fe8f5" stroke-width="1.5" fill="none"/><path d="M617.0,94.0 L622.0,97.7 L619.2,99.9 Z" fill="#6fe8f5"/><path d="M506.2,150 H561.5 L599,205 M535,141 V159 M535,141 L543,150 L535,159" stroke="#6fe8f5" stroke-width="1.5" fill="none"/><path d="M626,170 L610,196" stroke="#6fe8f5" stroke-width="1.3" fill="none"/><circle cx="537.7" cy="183.2" r="13.5" stroke="#6fe8f5" stroke-width="1.4" fill="none"/><line x1="524.5" y1="182" x2="551" y2="182" stroke="#6fe8f5" stroke-width="1"/><path d="M527,182 H552 C562,183 566,200 560,210 C556,216 553,219 551,221.5" stroke="#111" stroke-width="1.1" fill="none"/><path d="M550.3,221.9 L553.2,216.3 L555.8,218.8 Z" fill="#000"/><path d="M626,192 L611.6,206.4" stroke="#111" stroke-width="1" fill="none"/><path d="M611.6,206.4 L614.6,200.9 L617.1,203.4 Z" fill="#000"/><line x1="549" y1="212.4" x2="626" y2="203.6" stroke="#19e619" stroke-width="1.8"/><line x1="549.3" y1="214.9" x2="626.3" y2="206.1" stroke="#19e619" stroke-width="1.8"/><line x1="549" y1="232.2" x2="600.3" y2="226.6" stroke="#19e619" stroke-width="1.8"/><line x1="548.7" y1="229.7" x2="600.0" y2="224.1" stroke="#19e619" stroke-width="1.8"/><path d="M546.9,211 V233 M549.5,212 V232" stroke="#19e619" stroke-width="1.6" fill="none"/><ellipse cx="546.5" cy="222" rx="3" ry="2" stroke="#10c010" stroke-width="1.8" fill="none"/><path d="M600.6,206 V406" stroke="#19e619" stroke-width="2" fill="none"/><path d="M614,204 V406" stroke="#19e619" stroke-width="2.2" fill="none"/><path d="M614,204 V406" stroke="#b8f8b8" stroke-width="0.8" stroke-dasharray="6,6" fill="none"/><path d="M615.5,205 V250" stroke="#b87830" stroke-width="1.6" stroke-dasharray="5,2" fill="none"/><path d="M614,212 H626 M614,242 H626 M616,249 H626" stroke="#19e619" stroke-width="1.5" fill="none"/><circle cx="620.5" cy="217.6" r="2.6" stroke="#18c818" stroke-width="1.3" fill="none"/><circle cx="620.5" cy="227.9" r="2.6" stroke="#18c818" stroke-width="1.3" fill="none"/><circle cx="620.5" cy="238.1" r="2.6" stroke="#18c818" stroke-width="1.3" fill="none"/><path d="M589,190 L600,205 M614,190 L607,205" stroke="#6fe8f5" stroke-width="1.3" fill="none"/><path d="M504.7,303.8 H560.7 L600.3,215.9 M563,303.8 L602,218" stroke="#6fe8f5" stroke-width="1.3" fill="none"/><path d="M533.1,296 V312.4 L541.7,304 Z" stroke="#6fe8f5" stroke-width="1.3" fill="none"/><path d="M524.5,249.5 C538,249 546,244 550,233" stroke="#111" stroke-width="1.1" fill="none"/><path d="M550.3,232.2 L550.3,239.4 L546.8,238.5 Z" fill="#000"/><path d="M521,280.5 C548,278 566,262 565,233" stroke="#111" stroke-width="1.1" fill="none"/><path d="M565.0,232.2 L567.2,239.1 L563.6,239.3 Z" fill="#000"/><path d="M626,346 L614,351.8" stroke="#111" stroke-width="1.1" fill="none"/><path d="M613.9,351.8 L619.2,346.9 L620.9,350.1 Z" fill="#000"/><path d="M463,279 C455,280 450,270 457,263 C455,254 466,250 472,256 C476,249 486,249 490,256 C494,250 504,251 506,258 C512,254 521,259 518,267 C523,273 516,282 510,279 C507,285 497,285 494,280 C489,285 478,285 476,279 C472,284 465,284 463,279 Z" stroke="#e02828" stroke-width="1.3" fill="none"/><path d="M424.1,306.9 H453.9 L464.6,279.7" stroke="#e02828" stroke-width="1.5" fill="none"/><path d="M357,194.5 A3,2.5 0 0 1 357,199.5" stroke="#6fe8f5" stroke-width="1" fill="none"/></svg>
<svg style="left:0;top:0" width="270" height="322" viewBox="356 84 270 322"><path d="M357.90,171.60 L357.90,164.20 L360.36,171.60 L362.82,164.20 L362.82,171.60 M368.22,164.20 L364.36,164.20 L364.36,171.60 L368.22,171.60 M364.36,167.74 L367.17,167.74 M369.77,164.20 L373.98,164.20 M371.88,164.20 L371.88,171.60 M375.53,171.60 L377.64,164.20 L379.74,171.60 M376.23,169.13 L379.04,169.13 M381.29,164.20 L381.29,171.60 L384.80,171.60" stroke="#111" stroke-width="1.0" fill="none" stroke-linecap="round" stroke-linejoin="round"/><path d="M357.90,175.90 L357.90,183.30 L360.04,183.30 L361.26,182.81 L361.97,181.49 L362.19,179.60 L361.97,177.71 L361.26,176.39 L360.04,175.90 L357.90,175.90 M367.69,175.90 L363.76,175.90 L363.76,183.30 L367.69,183.30 M363.76,179.44 L366.61,179.44 M373.54,177.54 L373.11,176.56 L372.26,175.90 L370.83,175.90 L369.90,176.56 L369.40,177.71 L369.26,179.60 L369.40,181.49 L369.90,182.64 L370.83,183.30 L372.26,183.30 L373.11,182.64 L373.54,181.66 M375.11,175.90 L375.11,183.30 M379.40,175.90 L375.11,180.83 M376.69,179.19 L379.40,183.30" stroke="#111" stroke-width="1.0" fill="none" stroke-linecap="round" stroke-linejoin="round"/><path d="M476.52,182.14 L476.06,181.16 L475.13,180.50 L473.59,180.50 L472.59,181.16 L472.05,182.31 L471.90,184.20 L472.05,186.09 L472.59,187.24 L473.59,187.90 L475.13,187.90 L476.06,187.24 L476.52,186.26 M480.52,180.50 L479.29,180.91 L478.52,181.98 L478.21,184.20 L478.52,186.42 L479.29,187.49 L480.52,187.90 L481.75,187.49 L482.52,186.42 L482.83,184.20 L482.52,181.98 L481.75,180.91 L480.52,180.50 M484.53,187.90 L484.53,180.50 L489.14,187.90 L489.14,180.50 M490.84,187.90 L490.84,180.50 L495.46,187.90 L495.46,180.50 M497.38,187.32 L497.38,187.90 M503.54,187.90 L503.54,180.50 L506.62,180.50 L507.62,180.99 L508.16,182.06 L508.16,182.97 L507.62,184.04 L506.62,184.45 L503.54,184.45 M514.09,180.50 L509.85,180.50 L509.85,187.90 L514.09,187.90 M509.85,184.04 L512.93,184.04 M515.78,187.90 L515.78,180.50 L518.86,180.50 L519.86,180.99 L520.40,182.06 L520.40,182.97 L519.86,184.04 L518.86,184.45 L515.78,184.45 M518.48,184.45 L520.40,187.90" stroke="#111" stroke-width="1.0" fill="none" stroke-linecap="round" stroke-linejoin="round"/><path d="M361.31,234.80 L361.31,240.56 L360.96,241.71 L360.10,242.20 L359.17,242.20 L358.39,241.71 L358.10,240.56 M365.03,234.80 L363.89,235.21 L363.17,236.28 L362.89,238.50 L363.17,240.72 L363.89,241.79 L365.03,242.20 L366.17,241.79 L366.89,240.72 L367.17,238.50 L366.89,236.28 L366.17,235.21 L365.03,234.80 M368.81,234.80 L368.81,242.20 M374.74,236.20 L374.17,235.13 L373.17,234.80 L371.89,234.80 L371.03,235.13 L370.53,235.95 L370.53,237.10 L371.03,237.92 L371.89,238.34 L373.31,238.66 L374.17,239.08 L374.67,239.90 L374.67,241.05 L374.17,241.87 L373.17,242.20 L371.89,242.20 L371.03,241.87 L370.46,240.88 M376.31,234.80 L380.60,234.80 M378.46,234.80 L378.46,242.20" stroke="#111" stroke-width="1.0" fill="none" stroke-linecap="round" stroke-linejoin="round"/><path d="M358.10,254.30 L358.10,246.90 L361.08,246.90 L362.05,247.39 L362.57,248.46 L362.57,249.37 L362.05,250.44 L361.08,250.85 L358.10,250.85 M368.31,246.90 L364.21,246.90 L364.21,254.30 L368.31,254.30 M364.21,250.44 L367.19,250.44 M369.94,254.30 L369.94,246.90 L372.92,246.90 L373.89,247.39 L374.41,248.46 L374.41,249.37 L373.89,250.44 L372.92,250.85 L369.94,250.85 M372.55,250.85 L374.41,254.30 M380.15,254.30 L380.15,246.90 L383.13,246.90 L384.10,247.39 L384.62,248.46 L384.62,249.37 L384.10,250.44 L383.13,250.85 L380.15,250.85 M386.26,246.90 L386.26,254.30 L389.98,254.30 M391.62,254.30 L393.86,246.90 L396.09,254.30 M392.37,251.83 L395.35,251.83 M397.73,254.30 L397.73,246.90 L402.20,254.30 L402.20,246.90" stroke="#111" stroke-width="1.0" fill="none" stroke-linecap="round" stroke-linejoin="round"/><path d="M476.34,236.44 L475.89,235.46 L475.01,234.80 L473.53,234.80 L472.57,235.46 L472.05,236.61 L471.90,238.50 L472.05,240.39 L472.57,241.54 L473.53,242.20 L475.01,242.20 L475.89,241.54 L476.34,240.56 M477.96,234.80 L477.96,242.20 M482.40,234.80 L482.40,242.20 M477.96,238.34 L482.40,238.34 M484.02,242.20 L486.24,234.80 L488.46,242.20 M484.76,239.73 L487.72,239.73 M490.09,242.20 L490.09,234.80 L494.52,242.20 L494.52,234.80 M496.15,242.20 L496.15,234.80 L500.58,242.20 L500.58,234.80 M506.28,234.80 L502.21,234.80 L502.21,242.20 L506.28,242.20 M502.21,238.34 L505.17,238.34 M507.90,234.80 L507.90,242.20 L511.60,242.20" stroke="#111" stroke-width="1.0" fill="none" stroke-linecap="round" stroke-linejoin="round"/><path d="M471.90,254.30 L471.90,246.90 L474.90,246.90 L475.88,247.39 L476.40,248.46 L476.40,249.37 L475.88,250.44 L474.90,250.85 L471.90,250.85 M482.17,246.90 L478.05,246.90 L478.05,254.30 L482.17,254.30 M478.05,250.44 L481.05,250.44 M483.82,254.30 L483.82,246.90 L486.82,246.90 L487.80,247.39 L488.32,248.46 L488.32,249.37 L487.80,250.44 L486.82,250.85 L483.82,250.85 M486.45,250.85 L488.32,254.30 M494.10,254.30 L494.10,246.90 L497.10,246.90 L498.07,247.39 L498.60,248.46 L498.60,249.37 L498.07,250.44 L497.10,250.85 L494.10,250.85 M500.25,246.90 L500.25,254.30 L504.00,254.30 M505.65,254.30 L507.90,246.90 L510.15,254.30 M506.40,251.83 L509.40,251.83 M511.80,254.30 L511.80,246.90 L516.30,254.30 L516.30,246.90" stroke="#111" stroke-width="1.0" fill="none" stroke-linecap="round" stroke-linejoin="round"/><path d="M471.90,267.00 L473.39,274.40 L474.87,268.23 L476.36,274.40 L477.84,267.00 M481.33,267.00 L480.22,267.33 L479.85,268.23 L479.85,269.22 L480.37,270.12 L481.33,270.54 L482.30,270.95 L483.04,271.77 L483.19,272.76 L482.89,273.91 L482.07,274.40 L480.59,274.40 L479.77,273.91 L479.47,272.76 L479.62,271.77 L480.37,270.95 L481.33,270.54 L482.30,270.12 L482.82,269.22 L482.82,268.23 L482.45,267.33 L481.33,267.00 M484.82,269.47 L488.53,274.40 M488.53,269.47 L484.82,274.40 M490.39,268.81 L490.76,267.66 L491.65,267.00 L492.84,267.00 L493.66,267.58 L494.03,268.56 L493.96,269.63 L493.36,270.70 L490.17,274.40 L494.25,274.40 M497.74,267.00 L496.70,267.41 L496.11,268.64 L495.89,270.70 L496.11,272.76 L496.70,273.99 L497.74,274.40 L498.78,273.99 L499.38,272.76 L499.60,270.70 L499.38,268.64 L498.78,267.41 L497.74,267.00" stroke="#111" stroke-width="1.0" fill="none" stroke-linecap="round" stroke-linejoin="round"/><path d="M473.74,278.14 L472.64,279.87 L472.05,281.76 L472.05,283.40 L472.64,285.38 L473.74,287.19 M479.79,280.44 L479.34,279.46 L478.46,278.80 L476.99,278.80 L476.03,279.46 L475.51,280.61 L475.36,282.50 L475.51,284.39 L476.03,285.54 L476.99,286.20 L478.46,286.20 L479.34,285.54 L479.79,284.56 M481.41,286.20 L483.62,278.80 L485.83,286.20 M482.14,283.73 L485.09,283.73 M487.45,286.20 L487.45,278.80 L491.87,286.20 L491.87,278.80 M493.49,278.80 L497.92,278.80 M495.71,278.80 L495.71,286.20 M503.59,278.80 L499.54,278.80 L499.54,286.20 L503.59,286.20 M499.54,282.34 L502.49,282.34 M505.21,278.80 L505.21,286.20 L507.42,286.20 L508.68,285.71 L509.41,284.39 L509.64,282.50 L509.41,280.61 L508.68,279.29 L507.42,278.80 L505.21,278.80 M511.26,278.14 L512.36,279.87 L512.95,281.76 L512.95,283.40 L512.36,285.38 L511.26,287.19" stroke="#111" stroke-width="1.0" fill="none" stroke-linecap="round" stroke-linejoin="round"/><path d="M515.05,142.12 L516.33,141.46 L517.34,140.80 L517.34,147.40 M523.45,140.21 L519.21,148.50 M528.87,147.40 L528.87,140.80 L525.31,145.35 L530.40,145.35" stroke="#6fe8f5" stroke-width="1.0" fill="none" stroke-linecap="round" stroke-linejoin="round"/><path d="M513.09,151.81 L511.84,153.35 L511.17,155.04 L511.17,156.51 L511.84,158.27 L513.09,159.88 M515.18,153.72 L516.43,153.06 L517.44,152.40 L517.44,159.00 M523.45,151.81 L519.27,160.10 M527.38,152.40 L526.13,152.69 L525.71,153.50 L525.71,154.38 L526.30,155.19 L527.38,155.55 L528.47,155.92 L529.30,156.65 L529.47,157.53 L529.14,158.56 L528.22,159.00 L526.55,159.00 L525.63,158.56 L525.29,157.53 L525.46,156.65 L526.30,155.92 L527.38,155.55 L528.47,155.19 L529.05,154.38 L529.05,153.50 L528.64,152.69 L527.38,152.40 M531.31,151.81 L532.56,153.35 L533.23,155.04 L533.23,156.51 L532.56,158.27 L531.31,159.88" stroke="#6fe8f5" stroke-width="1.0" fill="none" stroke-linecap="round" stroke-linejoin="round"/><path d="M512.84,296.48 L514.07,295.84 L515.05,295.20 L515.05,301.60 M520.92,294.63 L516.84,302.67 M526.13,301.60 L526.13,295.20 L522.71,299.61 L527.60,299.61" stroke="#6fe8f5" stroke-width="1.0" fill="none" stroke-linecap="round" stroke-linejoin="round"/><path d="M512.84,307.78 L514.07,307.14 L515.05,306.50 L515.05,312.90 M520.92,305.93 L516.84,313.97 M526.13,312.90 L526.13,306.50 L522.71,310.91 L527.60,310.91" stroke="#6fe8f5" stroke-width="1.0" fill="none" stroke-linecap="round" stroke-linejoin="round"/><path d="M539.35,175.00 L536.27,175.00 L535.88,177.22 L536.73,176.89 L537.81,176.78 L538.88,177.11 L539.50,177.94 L539.50,178.89 L538.88,179.72 L537.73,180.00 L536.50,179.89 L535.65,179.28" stroke="#6fe8f5" stroke-width="0.9" fill="none" stroke-linecap="round" stroke-linejoin="round"/><path d="M533.04,188.94 L532.64,188.22 L531.93,188.00 L531.01,188.00 L530.41,188.22 L530.05,188.78 L530.05,189.56 L530.41,190.11 L531.01,190.39 L532.03,190.61 L532.64,190.89 L532.99,191.44 L532.99,192.22 L532.64,192.78 L531.93,193.00 L531.01,193.00 L530.41,192.78 L530.00,192.11 M534.36,188.00 L536.69,188.00 L535.47,190.00 L536.08,190.06 L536.59,190.44 L536.79,191.22 L536.69,192.17 L536.23,192.78 L535.47,193.00 L534.71,192.89 L534.16,192.33 M538.06,192.61 L538.06,193.00 M539.48,189.00 L540.24,188.50 L540.84,188.00 L540.84,193.00 M544.09,193.00 L544.09,188.00 L541.96,191.44 L545.00,191.44" stroke="#6fe8f5" stroke-width="0.9" fill="none" stroke-linecap="round" stroke-linejoin="round"/></svg><div class="t" style="left:18.95px;top:214.97px;font-size:13.5px;color:#e02828;font-family:'Liberation Sans',sans-serif;transform:scaleX(0.9072);transform-origin:0.05px 0;">W6X20</div>
</div>
<div class="a" style="left:633.6px;top:313px;width:2.4px;height:26.4px;background:#8a8a8a;"></div>
<div class="a" style="left:356px;top:406px;width:16px;height:35px;background:#3a3a3a;"></div>
<svg style="left:358px;top:419px;" width="12" height="8" viewBox="0 0 12 8"><path d="M1.5,1.5 L6,6 L10.5,1.5" stroke="#e0e0e0" stroke-width="1.1" fill="none"/></svg>
<div class="t" style="left:427.10px;top:417.07px;font-size:13.5px;color:#e8e8e8;font-family:'Liberation Sans',sans-serif;transform:scaleX(1.0312);transform-origin:0.50px 0;">34.00 x 22.00 in</div>
<div class="t" style="left:546.60px;top:417.07px;font-size:13.5px;color:#e8e8e8;font-family:'Liberation Sans',sans-serif;transform:scaleX(0.9951);transform-origin:0.60px 0;">Scale Not Set</div>
<!-- revu_tools -->
<svg style="left:642px;top:50px;" width="45" height="660" viewBox="0 0 45 660">
     <path d="M4,6.6 H38.5" stroke="#9a9a9a" stroke-width="2.2" stroke-dasharray="2,2"/>
     <rect x="13.5" y="21.7" width="17" height="16.5" stroke="#ececec" stroke-width="1.3" fill="none"/>
     <path d="M17.5,34.5 L22,24.5 L26.5,34.5 M19,31 H25" stroke="#ececec" stroke-width="2" fill="none"/>
     <!-- highlighter -->
     <path d="M13.6,74.2 H23.5 L19.5,68 Z" stroke="#ececec" stroke-width="1.2" fill="none" stroke-linejoin="round"/>
     <path d="M19.5,68 L26.5,60 L34,67.5 L23.5,74.2 M26.5,60 L29,56 M34,67.5 L37,67.5 M22,71 L28.5,64" stroke="#d4b030" stroke-width="1.3" fill="none"/>
     <!-- pen -->
     <path d="M14.5,111 L22,102 L26,106 L18,113 Z M22,102 L27,94 M26,106 L33,101" stroke="#2a8ad8" stroke-width="1.3" fill="none"/>
     <circle cx="14.5" cy="111.5" r="1.6" fill="#fff"/>
     <!-- callout wavy -->
     <rect x="14" y="129.5" width="12" height="8" stroke="#ececec" stroke-width="1.2" fill="none"/>
     <path d="M26,137.5 L30,141.5 L27,144" stroke="#ececec" stroke-width="1.1" fill="none"/>
     <path d="M13.5,145 q1.5,-2 3,0 t3,0 t3,0 t3,0 t3,0 t3,0" stroke="#ececec" stroke-width="1.1" fill="none"/>
     <!-- cloud -->
     <path transform="translate(0,8)" d="M16,170 C13,168 13,164 16,163 C15,160 19,158 21,160 C22,157 26,157 27,160 C30,158 33,161 31,164 C34,166 33,170 30,170 C31,173 27,176 25,173 C23,176 19,176 18,173 C15,174 13,172 16,170 Z" stroke="#ececec" stroke-width="1.2" fill="none"/>
     <!-- arrow callout -->
     <rect x="14" y="203" width="13" height="8" stroke="#ececec" stroke-width="1.2" fill="none"/>
     <path d="M27,208 L31,213 L24,218 M24,214 V218 H28" stroke="#ececec" stroke-width="1.2" fill="none"/>
     <!-- stamp -->
     <circle cx="17.5" cy="238" r="3.2" stroke="#ececec" stroke-width="1.2" fill="none"/>
     <path d="M15.5,241 V245 H11 V249 H24 V245 H19.5 V241 M10,252 H25" stroke="#ececec" stroke-width="1.2" fill="none"/>
     <path d="M31,243 L35,247 L39,243" stroke="#cfcfcf" stroke-width="1.1" fill="none"/>
     <!-- image dim -->
     <rect x="13" y="274" width="18" height="15" stroke="#6a6a6a" stroke-width="1.2" fill="none"/>
     <path d="M13,287 L19,280 L23,284 L26,281 L31,286" stroke="#6a6a6a" stroke-width="1.1" fill="none"/>
     <circle cx="19" cy="278" r="1" fill="#6a6a6a"/>
     <!-- crop dim -->
     <path d="M15,307 V325 H32 V309 H17 M13,309 H19 M15,305 V311" stroke="#6a6a6a" stroke-width="1.2" fill="none" stroke-dasharray="2.5,2"/>
     <path d="M4,342 H31" stroke="#9a9a9a" stroke-width="2.2" stroke-dasharray="2,2"/>
     <g transform="translate(-4.5,0)">
     <!-- line -->
     <path d="M13,372 L31,356" stroke="#ececec" stroke-width="1.4"/>
     <!-- arrow -->
     <path d="M13,409 L26,396" stroke="#ececec" stroke-width="1.6" fill="none"/><path d="M30.5,392.5 L21,395 L28,402 Z" fill="#ececec"/>
     <!-- arc dim -->
     <path d="M14,446 C14,436 22,429 31,429" stroke="#6a6a6a" stroke-width="1.2" fill="none"/>
     <!-- polyline dim -->
     <path d="M14,482 L18,471 L23,476 L26,466 L31,469 M14,478 L20,465" stroke="#6a6a6a" stroke-width="1.1" fill="none"/>
     <!-- dimension -->
     <path d="M13,508 V516 M31,508 V516 M13,512 H31 M13,512 L16,510 M13,512 L16,514 M31,512 L28,510 M31,512 L28,514" stroke="#ececec" stroke-width="1.3" fill="none"/>
     <!-- rect dim -->
     <rect x="13.5" y="538" width="17" height="14" stroke="#6a6a6a" stroke-width="1.2" fill="none"/>
     <ellipse cx="22" cy="581" rx="8.5" ry="6.5" stroke="#6a6a6a" stroke-width="1.2" fill="none"/>
     <path d="M13.5,609 H22 L30,627 H13.5 Z" stroke="#6a6a6a" stroke-width="1.2" fill="none" stroke-linejoin="round"/>
     </g>
    </svg>
<div class="a" style="left:643px;top:694.7px;width:33.5px;height:13.3px;background:#3a3a3a;"></div>
<svg style="left:657px;top:697px;" width="12" height="8" viewBox="0 0 12 8"><path d="M1.5,1.5 L6,6 L10.5,1.5" stroke="#cfcfcf" stroke-width="1.1" fill="none"/></svg>
<!-- revu_markups -->
<div class="a" style="left:391px;top:443px;width:1px;height:263px;background:#1a1a1a;"></div>
<svg style="left:366px;top:458px;" width="14" height="10" viewBox="0 0 14 10"><path d="M5,1 L1.5,4.5 L5,8 M10,1 L6.5,4.5 L10,8" stroke="#e6e6e6" stroke-width="1.2" fill="none"/></svg>
<div class="a" style="left:356px;top:482.3px;width:35.2px;height:34.7px;background:#1c5c8c;"></div>
<svg style="left:356px;top:482px;" width="35" height="35" viewBox="0 0 35 35"><path d="M14,11 H26 M14,17.5 H26 M14,24 H26" stroke="#fff" stroke-width="1.6"/>
      <circle cx="10.5" cy="11" r="1.2" fill="#fff"/><circle cx="10.5" cy="17.5" r="1.2" fill="#fff"/><circle cx="10.5" cy="24" r="1.2" fill="#fff"/></svg>
<svg style="left:362px;top:524px;" width="22" height="22" viewBox="0 0 22 22"><path d="M2,5 L10,1.5 L19,5 V16 L10,20 L2,16 Z M2,5 L10,8.5 L19,5 M10,8.5 V20" stroke="#e0e0e0" stroke-width="1.1" fill="none"/>
      <text x="4" y="16" font-family="Liberation Sans" font-size="7" font-weight="bold" fill="#e0e0e0">3</text><text x="11" y="16.5" font-family="Liberation Sans" font-size="7" font-weight="bold" fill="#e0e0e0">D</text></svg>
<svg style="left:362px;top:559px;" width="22" height="22" viewBox="0 0 22 22"><path d="M5,2 H19 V16 C19,19 16,20 14,20 H3 C5,19 5,17 5,15 Z M16,20 C18,20 19,18 19,16" stroke="#e0e0e0" stroke-width="1.1" fill="none"/>
      <rect x="7" y="5" width="9" height="8" stroke="#e0e0e0" stroke-width="1" fill="none"/>
      <text x="8" y="11.5" font-family="Liberation Sans" font-size="6" font-weight="bold" fill="#e0e0e0">JS</text></svg>
<div class="a" style="left:398.4px;top:452.5px;width:210px;height:25.1px;background:#2e2e2e;border:1px solid #7a7a7a;border-right:none;"></div>
<div class="t" style="left:402.85px;top:459.25px;font-size:14px;color:#eeeeee;font-family:'Liberation Sans',sans-serif;font-weight:bold;transform:scaleX(1.0094);transform-origin:0.95px 0;">Markups List</div>
<svg style="left:497px;top:461px;" width="12" height="8" viewBox="0 0 12 8"><path d="M1.5,1.5 L6,6 L10.5,1.5" stroke="#cfcfcf" stroke-width="1.1" fill="none"/></svg>
<svg style="left:520px;top:457px;" width="22" height="17" viewBox="0 0 22 17"><path d="M2,8.5 C6,3 16,3 20,8.5 C16,14 6,14 2,8.5 Z" stroke="#d8d8d8" stroke-width="1.1" fill="none"/>
      <circle cx="11" cy="8.5" r="2.5" stroke="#d8d8d8" stroke-width="1.1" fill="none"/><path d="M4,15 L18,2" stroke="#d8d8d8" stroke-width="1.2"/></svg>
<svg style="left:618px;top:458px;" width="14" height="10" viewBox="0 0 14 10"><path d="M5,1 L1.5,4.5 L5,8 M10,1 L6.5,4.5 L10,8" stroke="#e6e6e6" stroke-width="1.2" fill="none"/></svg>
<div class="a" style="left:392.3px;top:482px;width:233px;height:2.6px;background:#e8883c;"></div>
<div class="a" style="left:392.3px;top:484px;width:233px;height:34px;background:#dcdbd2;"></div>
<div class="t" style="left:402.40px;top:493.14px;font-size:12px;color:#9a9a9a;font-family:'Liberation Sans',sans-serif;font-weight:bold;transform:scaleX(1.0247);transform-origin:0.30px 0;">All</div>
<div class="t" style="left:604.20px;top:493.14px;font-size:12px;color:#9a9a9a;font-family:'Liberation Sans',sans-serif;font-weight:bold;transform:scaleX(1.0247);transform-origin:0.30px 0;">All</div>
<div class="a" style="left:392.3px;top:518px;width:233px;height:35px;background:#3c3c3c;"></div>
<div class="a" style="left:392.3px;top:553px;width:233px;height:140px;background:#2e2e2e;"></div>
<div class="a" style="left:594.8px;top:484px;width:1px;height:209px;background:#8a8a8a;"></div>
<svg style="left:396px;top:529px;" width="14" height="14" viewBox="0 0 14 14"><rect x="1.5" y="1.5" width="10.5" height="10.5" stroke="#d8d8d8" stroke-width="1.1" fill="none"/><path d="M4,6.75 H9.5" stroke="#d8d8d8" stroke-width="1.2"/></svg>
<div class="t" style="left:423.15px;top:527.52px;font-size:12.5px;color:#eeeeee;font-family:'Liberation Sans',sans-serif;font-weight:bold;transform:scaleX(0.8834);transform-origin:0.35px 0;">Subject</div>
<div class="t" style="left:603.65px;top:527.52px;font-size:12.5px;color:#eeeeee;font-family:'Liberation Sans',sans-serif;font-weight:bold;transform:scaleX(0.9906);transform-origin:0.85px 0;">Pag</div>
<svg style="left:435px;top:574px;" width="20" height="18" viewBox="0 0 20 18"><rect x="1.5" y="1.5" width="12" height="8" stroke="#e6e6e6" stroke-width="1.1" fill="none"/>
      <path d="M13.5,9.5 L17,12.5 L14,15" stroke="#e6e6e6" stroke-width="1" fill="none"/>
      <path d="M1,15.5 q1.3,-2 2.6,0 t2.6,0 t2.6,0 t2.6,0 t2.6,0" stroke="#e6e6e6" stroke-width="1" fill="none"/></svg>
<div class="t" style="left:458.65px;top:577.02px;font-size:12.5px;color:#eeeeee;font-family:'Liberation Sans',sans-serif;transform:scaleX(0.9935);transform-origin:0.65px 0;">Cloud+</div>
<div class="t" style="left:596.70px;top:577.02px;font-size:12.5px;color:#eeeeee;font-family:'Liberation Sans',sans-serif;transform:scaleX(1.1404);transform-origin:0.60px 0;">2</div>
<svg style="left:435px;top:634px;" width="20" height="18" viewBox="0 0 20 18"><rect x="1.5" y="1.5" width="12" height="8" stroke="#e6e6e6" stroke-width="1.1" fill="none"/>
      <path d="M13.5,9.5 L17,12.5 L14,15" stroke="#e6e6e6" stroke-width="1" fill="none"/>
      <path d="M1,15.5 q1.3,-2 2.6,0 t2.6,0 t2.6,0 t2.6,0 t2.6,0" stroke="#e6e6e6" stroke-width="1" fill="none"/></svg>
<div class="t" style="left:458.65px;top:637.22px;font-size:12.5px;color:#eeeeee;font-family:'Liberation Sans',sans-serif;transform:scaleX(0.9935);transform-origin:0.65px 0;">Cloud+</div>
<div class="t" style="left:596.70px;top:637.22px;font-size:12.5px;color:#eeeeee;font-family:'Liberation Sans',sans-serif;transform:scaleX(1.1404);transform-origin:0.60px 0;">2</div>
<div class="a" style="left:625.3px;top:484px;width:16.7px;height:222px;background:#f0f0f0;"></div>
<div class="a" style="left:633px;top:594px;width:2.5px;height:80.8px;background:#8a8a8a;"></div>
<div class="a" style="left:392.3px;top:692.7px;width:233px;height:13.3px;background:#f0f0f0;"></div>
<div class="a" style="left:409px;top:701px;width:39.6px;height:2.2px;background:#8a8a8a;"></div>
<!-- taskbar -->
<svg style="left:73.6px;top:718.7px;" width="24" height="24" viewBox="0 0 24 24"><defs><linearGradient id="wg" x1="0" y1="0" x2="1" y2="1"><stop offset="0" stop-color="#60d0ff"/><stop offset="1" stop-color="#1a90e8"/></linearGradient></defs>
      <rect x="0" y="0" width="11.2" height="11.2" fill="url(#wg)"/><rect x="12.4" y="0" width="11.2" height="11.2" fill="url(#wg)"/>
      <rect x="0" y="12.4" width="11.2" height="11.2" fill="url(#wg)"/><rect x="12.4" y="12.4" width="11.2" height="11.2" fill="url(#wg)"/></svg>
<div class="a" style="left:110.5px;top:714.3px;width:218.5px;height:31.2px;background:#2c333e;border-radius:16px;"></div>
<svg style="left:121px;top:723px;" width="17" height="16" viewBox="0 0 17 16"><circle cx="9.5" cy="6.5" r="5.2" stroke="#dcdcdc" stroke-width="1.7" fill="none"/><path d="M6,10 L1.5,14.5" stroke="#dcdcdc" stroke-width="2"/></svg>
<div class="t" style="left:146.70px;top:722.50px;font-size:15px;color:#d6d6d6;font-family:'Liberation Sans',sans-serif;transform:scaleX(0.8821);transform-origin:0.70px 0;">Search</div>
<svg style="left:270px;top:712px;" width="60" height="36" viewBox="0 0 60 36">
      <path d="M8.5,18 L14,25 L27,30 L30,29 M13.5,17.5 L17,24" stroke="#c9a868" stroke-width="2" fill="none" stroke-linecap="round"/>
      <path d="M27,30 C32,27 38,24 44,20 L50.5,15.5 M44,20 L51,22" stroke="#c09050" stroke-width="2.2" fill="none" stroke-linecap="round"/>
      <path d="M28,29 L34,31 L35,28" stroke="#d8a040" stroke-width="2" fill="none"/>
      <ellipse cx="29" cy="19.5" rx="5" ry="8.5" transform="rotate(-12 29 19.5)" fill="#9ee070"/>
      <path d="M31,12 C34,16 35,22 33,27 L31,27 Z" fill="#d8a030" opacity="0.8"/>
      <ellipse cx="27.5" cy="9.5" rx="4.5" ry="3.5" fill="#b8401c"/>
      <path d="M24,11 C26,13 30,13 31,12" stroke="#f0d060" stroke-width="1.5" fill="none"/>
      <path d="M23,10 L20.5,11" stroke="#7060d0" stroke-width="1.6"/></svg>
<svg style="left:342px;top:718.7px;" width="25" height="23" viewBox="0 0 25 23"><rect x="0" y="7" width="16" height="15" rx="2" fill="#6a6c70"/><rect x="7" y="0" width="17" height="15" rx="2" fill="#f0f0f0"/><rect x="5" y="7" width="11" height="8" fill="#a8a8aa"/></svg>
<svg style="left:385px;top:718px;" width="24" height="24" viewBox="0 0 24 24"><path d="M12,1 A11,11 0 1 1 4,19 L2,23 L3,17 A11,11 0 0 1 12,1 Z" fill="#7b83eb"/><rect x="6" y="8" width="9" height="8" rx="1.5" fill="#fff"/><path d="M15,11 L19,8.5 V15.5 L15,13 Z" fill="#fff"/></svg>
<svg style="left:430px;top:719px;" width="24" height="22" viewBox="0 0 24 22"><path d="M0,2 H8 L10,4 H24 V21 H0 Z" fill="#e8a820"/><rect x="0" y="6" width="24" height="15" rx="1" fill="#ffcc3a"/><rect x="4" y="15" width="16" height="6" rx="1" fill="#1e80d8"/></svg>
<div class="a" style="left:466.2px;top:710px;width:39.5px;height:39.5px;background:rgba(255,255,255,0.07);border-radius:5px;"></div>
<svg style="left:474px;top:718px;" width="26" height="26" viewBox="0 0 26 26"><rect x="1" y="1" width="18" height="18" rx="2" fill="#ececec"/>
      <path d="M4,4 H14 M4,4 V14" stroke="#d04020" stroke-width="2.4" stroke-dasharray="2,1.4"/>
      <path d="M12,11 L20,19 M20,11 L14,17" stroke="#5a6070" stroke-width="1.8"/>
      <circle cx="20.5" cy="19.5" r="2.8" stroke="#3aa0f0" stroke-width="1.6" fill="none"/><circle cx="12" cy="22" r="2.8" stroke="#3aa0f0" stroke-width="1.6" fill="none"/></svg>
<div class="a" style="left:478.3px;top:746.2px;width:15.3px;height:2.8px;background:#d8a6f0;border-radius:2px;"></div>
<svg style="left:518px;top:717.7px;" width="24" height="24" viewBox="0 0 24 24"><circle cx="12" cy="12" r="11.5" fill="#2aa84a"/>
      <path d="M12,12 L2,6.3 A11.5,11.5 0 0 1 22,6.3 Z" fill="#e33b2e"/>
      <path d="M12,12 L22,6.3 A11.5,11.5 0 0 1 12,23.5 Z" fill="#fbc318"/>
      <circle cx="12" cy="12" r="5.2" fill="#fff"/><circle cx="12" cy="12" r="4" fill="#1a73e8"/></svg>
<svg style="left:562.5px;top:717.5px;" width="23" height="26" viewBox="0 0 23 26"><path d="M2,0 H22 V20 H2 Z" fill="#de1a48"/><path d="M0,2 L2,0 V20 L0,22 Z" fill="#8a0c2c"/>
          <rect x="3" y="16" width="18" height="7" fill="#8a0c2c"/></svg>
<div class="t" style="left:569.70px;top:720.94px;font-size:12px;color:#fff;font-family:'Liberation Sans',sans-serif;font-weight:bold;transform:scaleX(1.0625);transform-origin:0.30px 0;">A</div>
<div class="t" style="left:568.25px;top:735.02px;font-size:6px;color:#fff;font-family:'Liberation Sans',sans-serif;font-weight:bold;transform:scaleX(0.8835);transform-origin:0.25px 0;">CAD</div>
<svg style="left:606.5px;top:717.5px;" width="23" height="26" viewBox="0 0 23 26"><path d="M2,0 H22 V20 H2 Z" fill="#c8228e"/><path d="M0,2 L2,0 V20 L0,22 Z" fill="#7a1058"/>
          <rect x="3" y="16" width="18" height="7" fill="#7a1058"/></svg>
<div class="t" style="left:613.50px;top:720.94px;font-size:12px;color:#fff;font-family:'Liberation Sans',sans-serif;font-weight:bold;transform:scaleX(1.0897);transform-origin:0.50px 0;">C</div>
<div class="t" style="left:612.25px;top:735.02px;font-size:6px;color:#fff;font-family:'Liberation Sans',sans-serif;font-weight:bold;transform:scaleX(0.9607);transform-origin:0.25px 0;">C3D</div>
<svg style="left:650.5px;top:717.5px;" width="23" height="26" viewBox="0 0 23 26"><path d="M2,0 H22 V20 H2 Z" fill="#2a7fe0"/><path d="M0,2 L2,0 V20 L0,22 Z" fill="#103c88"/>
          <rect x="3" y="16" width="18" height="7" fill="#103c88"/></svg>
<div class="t" style="left:657.20px;top:720.94px;font-size:12px;color:#fff;font-family:'Liberation Sans',sans-serif;font-weight:bold;transform:scaleX(1.1258);transform-origin:0.80px 0;">R</div>
<div class="t" style="left:656.10px;top:735.02px;font-size:6px;color:#fff;font-family:'Liberation Sans',sans-serif;font-weight:bold;transform:scaleX(0.9649);transform-origin:0.40px 0;">RVT</div>
<div class="a" style="left:570.8px;top:746.5px;width:6px;height:2.5px;background:#9a9aa8;border-radius:1px;"></div>
<div class="a" style="left:658.7px;top:746.5px;width:6px;height:2.5px;background:#9a9aa8;border-radius:1px;"></div>
<div class="a" style="left:695.1px;top:718.7px;width:21.1px;height:19.1px;background:#001e36;border-radius:3px;border:1.5px solid #6ab0f0;"></div>
<div class="t" style="left:697.80px;top:723.14px;font-size:12px;color:#31a8ff;font-family:'Liberation Sans',sans-serif;font-weight:bold;transform:scaleX(1.0187);transform-origin:0.80px 0;">Ps</div>
<div class="a" style="left:739.3px;top:718.7px;width:20.8px;height:19.1px;background:#2a0a3c;border-radius:3px;border:1.5px solid #c070e0;"></div>
<div class="t" style="left:742.00px;top:723.14px;font-size:12px;color:#e080ff;font-family:'Liberation Sans',sans-serif;font-weight:bold;transform:scaleX(1.1416);transform-origin:0.80px 0;">Pr</div>
<div class="a" style="left:783.6px;top:718.7px;width:20.4px;height:19.1px;background:#49021f;border-radius:3px;"></div>
<div class="t" style="left:786.30px;top:723.14px;font-size:12px;color:#ff3366;font-family:'Liberation Sans',sans-serif;font-weight:bold;transform:scaleX(1.4254);transform-origin:0.80px 0;">Id</div>
<div class="a" style="left:827.6px;top:718.7px;width:20.4px;height:19.1px;background:#330000;border-radius:3px;"></div>
<div class="t" style="left:830.80px;top:723.14px;font-size:12px;color:#ff9a00;font-family:'Liberation Sans',sans-serif;font-weight:bold;transform:scaleX(1.1944);transform-origin:0.30px 0;">Ai</div>
<div class="a" style="left:871.5px;top:718.7px;width:20.8px;height:19.1px;background:#00005b;border-radius:3px;"></div>
<div class="t" style="left:874.70px;top:723.14px;font-size:12px;color:#9999ff;font-family:'Liberation Sans',sans-serif;font-weight:bold;transform:scaleX(0.9141);transform-origin:0.30px 0;">Ae</div>
<div class="a" style="left:915.4px;top:719px;width:20.8px;height:19.1px;background:#001e36;border-radius:3px;"></div>
<div class="t" style="left:918.10px;top:723.44px;font-size:12px;color:#31a8ff;font-family:'Liberation Sans',sans-serif;font-weight:bold;transform:scaleX(0.9963);transform-origin:0.80px 0;">Ps</div>
<div class="a" style="left:959.7px;top:719px;width:20.5px;height:19.1px;background:#470137;border-radius:3px;"></div>
<div class="t" style="left:962.40px;top:723.44px;font-size:12px;color:#ff61f6;font-family:'Liberation Sans',sans-serif;font-weight:bold;transform:scaleX(0.7580);transform-origin:0.80px 0;">Dw</div>
<div class="a" style="left:1002.8px;top:718.5px;width:22.8px;height:20.5px;background:#000f30;border-radius:3px;"></div>
<div class="t" style="left:1005.50px;top:722.94px;font-size:12px;color:#31a8ff;font-family:'Liberation Sans',sans-serif;font-weight:bold;transform:scaleX(1.3909);transform-origin:0.80px 0;">Fr</div>
<svg style="left:1046px;top:717px;" width="24" height="24" viewBox="0 0 24 24"><path d="M1.5,19 A11,11 0 1 1 22.5,19 L17,10 L15,14 L12,6 L8,14 L6.5,11 Z" fill="#4a86f8"/></svg>
<div class="a" style="left:1055px;top:746.5px;width:6px;height:2.5px;background:#9a9aa8;border-radius:1px;"></div>
<svg style="left:1090px;top:717.5px;" width="23" height="23" viewBox="0 0 23 23"><circle cx="11.5" cy="11.5" r="11" fill="#1e9be0"/><circle cx="11.5" cy="11.5" r="8.5" fill="#fff"/><path d="M8,18 V6 H13 C17,6 17,12 13,12 H9 L15,18" stroke="#1e9be0" stroke-width="2.6" fill="none"/></svg>
<div class="a" style="left:1098.6px;top:746.5px;width:6px;height:2.5px;background:#9a9aa8;border-radius:1px;"></div>
<svg style="left:1142px;top:725px;" width="14" height="9" viewBox="0 0 14 9"><path d="M1,7.5 L7,1.5 L13,7.5" stroke="#eeeeee" stroke-width="1.3" fill="none"/></svg>
<svg style="left:1164px;top:724px;" width="18" height="11" viewBox="0 0 18 11"><path d="M4,10 A3.5,3.5 0 0 1 3.5,3.5 A5,5 0 0 1 12,3 A3.5,3.5 0 0 1 17,7 A3,3 0 0 1 15,10 Z" fill="#e8e8ea"/><path d="M4,10 A3.5,3.5 0 0 1 3.5,3.5 A5,5 0 0 1 12,3 L9,6 Z" fill="#bcbcc4"/></svg>
<svg style="left:1193px;top:723px;" width="16" height="13" viewBox="0 0 16 13"><path d="M1,5 A10,10 0 0 1 15,5 M3.5,7.5 A6.5,6.5 0 0 1 12.5,7.5 M5.8,9.8 A3.3,3.3 0 0 1 10.2,9.8" stroke="#eeeeee" stroke-width="1.5" fill="none"/><circle cx="8" cy="11.5" r="1.2" fill="#eee"/></svg>
<svg style="left:1216px;top:723px;" width="18" height="13" viewBox="0 0 18 13"><path d="M1,4 H4 L8,1 V12 L4,9 H1 Z" stroke="#eeeeee" stroke-width="1.2" fill="none"/><path d="M10.5,4 A3,3 0 0 1 10.5,9 M12.5,2 A6,6 0 0 1 12.5,11" stroke="#eeeeee" stroke-width="1.2" fill="none"/><path d="M14.5,0.5 A8,8 0 0 1 14.5,12.5" stroke="#888" stroke-width="1" fill="none"/></svg>
<svg style="left:1240px;top:725px;" width="19" height="11" viewBox="0 0 19 11"><rect x="1" y="1" width="14" height="8.5" rx="2" stroke="#eeeeee" stroke-width="1.3" fill="none"/><rect x="3" y="3" width="10" height="4.5" fill="#eeeeee"/><rect x="16" y="3.5" width="2" height="3.5" fill="#eee"/></svg>
<div class="t" style="left:1280.75px;top:715.52px;font-size:12.5px;color:#ffffff;font-family:'Liberation Sans',sans-serif;transform:scaleX(0.9068);transform-origin:0.95px 0;">1:34 PM</div>
<div class="t" style="left:1273.05px;top:731.82px;font-size:12.5px;color:#ffffff;font-family:'Liberation Sans',sans-serif;transform:scaleX(1.0168);transform-origin:0.65px 0;">6/6/2024</div>
<svg style="left:1330px;top:722px;" width="17" height="17" viewBox="0 0 17 17"><circle cx="8.2" cy="8.2" r="8" fill="#d9a6e0"/></svg>
<div class="t" style="left:1334.55px;top:726.29px;font-size:11px;color:#222222;font-family:'Liberation Sans',sans-serif;transform:scaleX(1.1650);transform-origin:0.45px 0;">5</div>
</body></html>
